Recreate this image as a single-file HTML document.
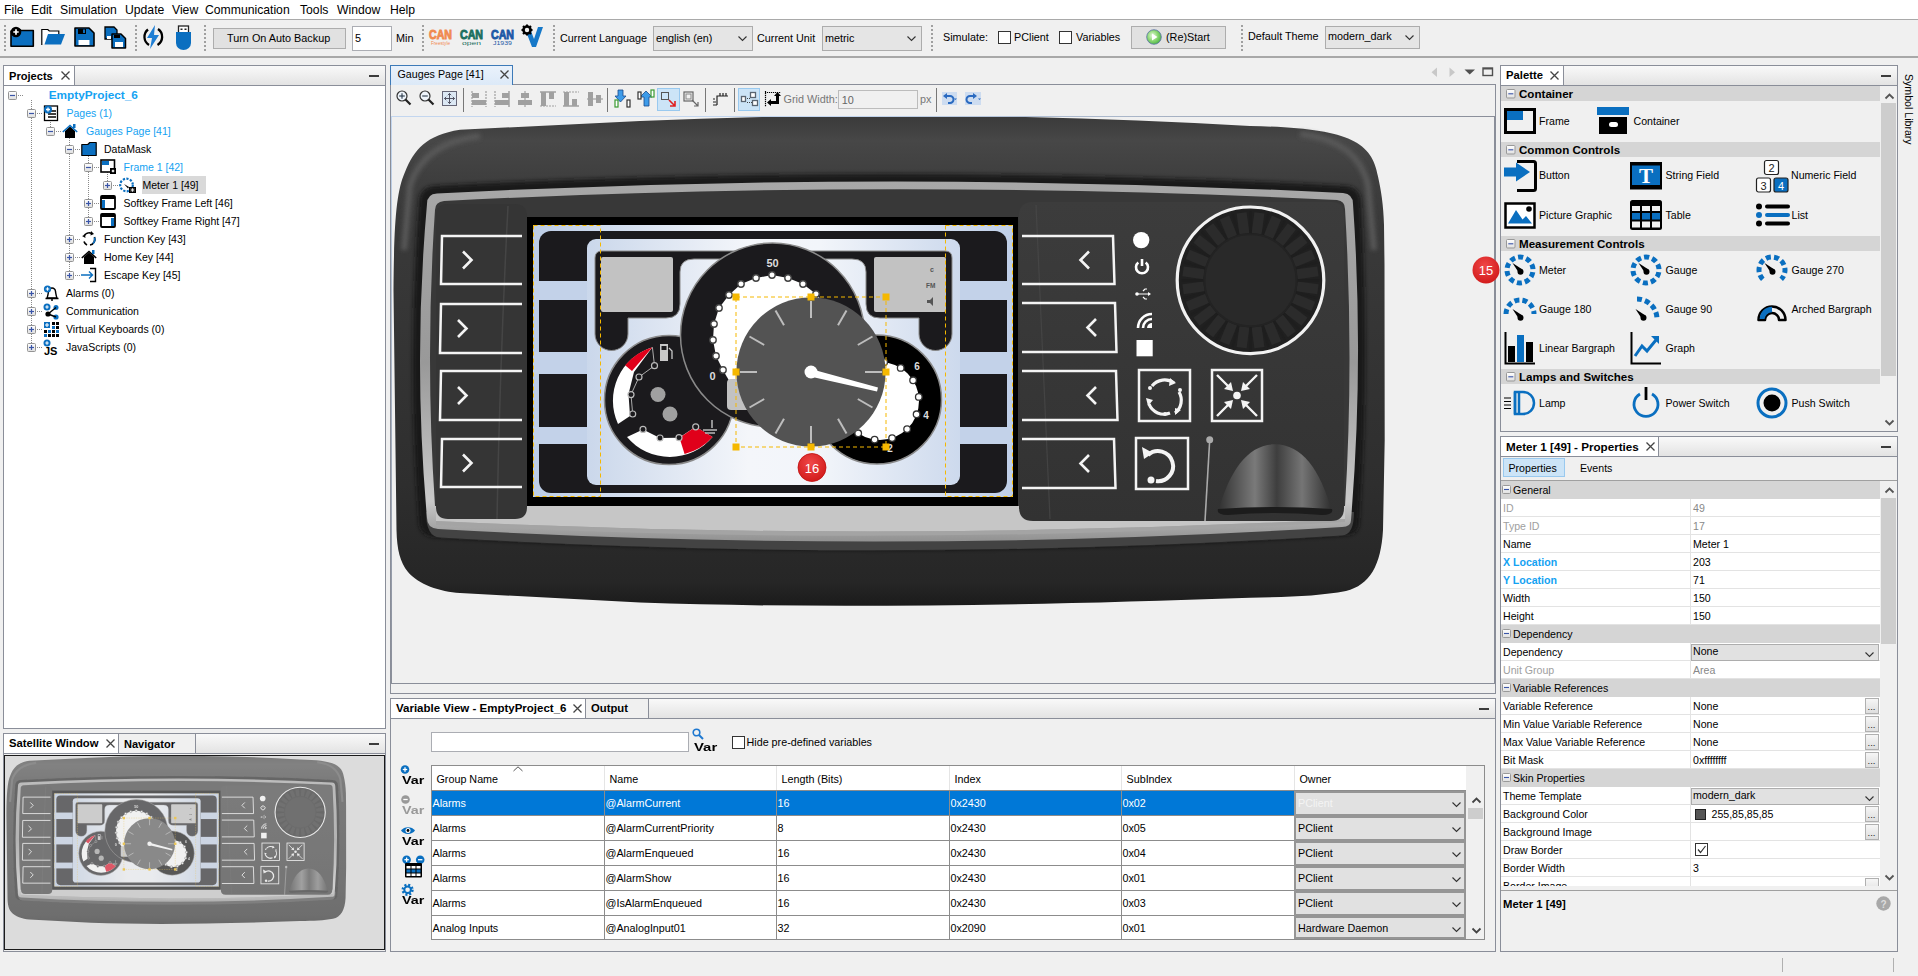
<!DOCTYPE html><html><head><meta charset="utf-8"><style>
*{box-sizing:border-box;margin:0;padding:0}
html,body{width:1918px;height:976px;overflow:hidden;background:#f0f0f0;font-family:"Liberation Sans",sans-serif;font-size:12px;color:#000;position:relative}
.a{position:absolute}
svg.a{overflow:visible}
.t{position:absolute;white-space:nowrap}
</style></head><body><div class="a" style="left:0px;top:0px;width:1918px;height:19px;background:#fff"></div>
<div class="a" style="left:0px;top:19px;width:1918px;height:1px;background:#a9a9a9"></div>
<div class="t" style="left:4px;top:3.67px;font-size:12.2px;line-height:12.2px;color:#000;">File</div>
<div class="t" style="left:31px;top:3.67px;font-size:12.2px;line-height:12.2px;color:#000;">Edit</div>
<div class="t" style="left:60px;top:3.67px;font-size:12.2px;line-height:12.2px;color:#000;">Simulation</div>
<div class="t" style="left:125px;top:3.67px;font-size:12.2px;line-height:12.2px;color:#000;">Update</div>
<div class="t" style="left:172px;top:3.67px;font-size:12.2px;line-height:12.2px;color:#000;">View</div>
<div class="t" style="left:205px;top:3.67px;font-size:12.2px;line-height:12.2px;color:#000;">Communication</div>
<div class="t" style="left:300px;top:3.67px;font-size:12.2px;line-height:12.2px;color:#000;">Tools</div>
<div class="t" style="left:337px;top:3.67px;font-size:12.2px;line-height:12.2px;color:#000;">Window</div>
<div class="t" style="left:390px;top:3.67px;font-size:12.2px;line-height:12.2px;color:#000;">Help</div>
<div class="a" style="left:0px;top:56px;width:1918px;height:2px;background:#a8a8a8"></div>
<div class="a" style="left:3px;top:65px;width:383px;height:664px;border:1px solid #8a8e99;background:#fff"></div>
<div class="a" style="left:4px;top:66px;width:381px;height:19px;background:linear-gradient(#f9f9f9,#e3e3e3)"></div>
<div class="a" style="left:3px;top:85px;width:383px;height:1px;background:#8a8e99"></div>
<div class="a" style="left:4px;top:66px;width:71px;height:19px;background:#fff;border-right:1px solid #8a8e99"></div>
<div class="t" style="left:9px;top:70.60px;font-size:11.1px;line-height:11.1px;font-weight:bold;color:#000;">Projects</div>
<svg class="a" style="left:61px;top:71px;" width="9" height="9" viewBox="0 0 9 9"><path d="M0.5 0.5L8.5 8.5M8.5 0.5L0.5 8.5" stroke="#444" stroke-width="1.3"/></svg>
<div class="a" style="left:369px;top:75px;width:10px;height:2px;background:#3c3c3c"></div>
<div class="a" style="left:3px;top:733px;width:383px;height:219px;border:1px solid #8a8e99;background:#f0f0f0"></div>
<div class="a" style="left:4px;top:734px;width:381px;height:19px;background:linear-gradient(#f9f9f9,#e3e3e3)"></div>
<div class="a" style="left:3px;top:753px;width:383px;height:1px;background:#8a8e99"></div>
<div class="a" style="left:4px;top:734px;width:115px;height:19px;background:#fff;border-right:1px solid #8a8e99"></div>
<div class="t" style="left:9px;top:738.45px;font-size:11.28px;line-height:11.28px;font-weight:bold;color:#000;">Satellite Window</div>
<svg class="a" style="left:106px;top:739px;" width="9" height="9" viewBox="0 0 9 9"><path d="M0.5 0.5L8.5 8.5M8.5 0.5L0.5 8.5" stroke="#444" stroke-width="1.3"/></svg>
<div class="a" style="left:119px;top:734px;width:77px;height:19px;background:#f0f0f0;border-right:1px solid #8a8e99"></div>
<div class="t" style="left:124px;top:738.64px;font-size:11.06px;line-height:11.06px;font-weight:bold;color:#000;">Navigator</div>
<div class="a" style="left:369px;top:743px;width:10px;height:2px;background:#3c3c3c"></div>
<div class="a" style="left:390px;top:84px;width:1106px;height:610px;border:1px solid #8a8e99;background:#f0f0f0"></div>
<div class="a" style="left:390px;top:117px;width:1px;height:567px;background:#8a8e99"></div>
<div class="a" style="left:391px;top:117px;width:1px;height:567px;background:linear-gradient(#c3d6ef,#8a8e99)"></div>
<div class="a" style="left:1494px;top:117px;width:2px;height:567px;background:#8a8e99"></div>
<div class="a" style="left:391px;top:683px;width:1104px;height:1px;background:#8a8e99"></div>
<div class="a" style="left:390px;top:698px;width:1106px;height:254px;border:1px solid #8a8e99;background:#f0f0f0"></div>
<div class="a" style="left:391px;top:699px;width:1104px;height:19px;background:linear-gradient(#f9f9f9,#e3e3e3)"></div>
<div class="a" style="left:390px;top:718px;width:1106px;height:1px;background:#8a8e99"></div>
<div class="a" style="left:391px;top:699px;width:195px;height:19px;background:#fff;border-right:1px solid #8a8e99"></div>
<div class="t" style="left:396px;top:703.27px;font-size:11.5px;line-height:11.5px;font-weight:bold;color:#000;">Variable View - EmptyProject_6</div>
<svg class="a" style="left:573px;top:704px;" width="9" height="9" viewBox="0 0 9 9"><path d="M0.5 0.5L8.5 8.5M8.5 0.5L0.5 8.5" stroke="#444" stroke-width="1.3"/></svg>
<div class="a" style="left:586px;top:699px;width:63px;height:19px;background:#f0f0f0;border-right:1px solid #8a8e99"></div>
<div class="t" style="left:591px;top:703.44px;font-size:11.29px;line-height:11.29px;font-weight:bold;color:#000;">Output</div>
<div class="a" style="left:1479px;top:708px;width:10px;height:2px;background:#3c3c3c"></div>
<div class="a" style="left:1500px;top:65px;width:398px;height:367px;border:1px solid #8a8e99;background:#f0f0f0"></div>
<div class="a" style="left:1501px;top:66px;width:396px;height:19px;background:linear-gradient(#f9f9f9,#e3e3e3)"></div>
<div class="a" style="left:1500px;top:85px;width:398px;height:1px;background:#8a8e99"></div>
<div class="a" style="left:1501px;top:66px;width:63px;height:19px;background:#fff;border-right:1px solid #8a8e99"></div>
<div class="t" style="left:1506px;top:70.45px;font-size:11.28px;line-height:11.28px;font-weight:bold;color:#000;">Palette</div>
<svg class="a" style="left:1550px;top:71px;" width="9" height="9" viewBox="0 0 9 9"><path d="M0.5 0.5L8.5 8.5M8.5 0.5L0.5 8.5" stroke="#444" stroke-width="1.3"/></svg>
<div class="a" style="left:1881px;top:75px;width:10px;height:2px;background:#3c3c3c"></div>
<div class="a" style="left:1500px;top:436px;width:398px;height:516px;border:1px solid #8a8e99;background:#f0f0f0"></div>
<div class="a" style="left:1501px;top:437px;width:396px;height:19px;background:linear-gradient(#f9f9f9,#e3e3e3)"></div>
<div class="a" style="left:1500px;top:456px;width:398px;height:1px;background:#8a8e99"></div>
<div class="a" style="left:1501px;top:437px;width:158px;height:19px;background:#fff;border-right:1px solid #8a8e99"></div>
<div class="t" style="left:1506px;top:441.12px;font-size:11.67px;line-height:11.67px;font-weight:bold;color:#000;">Meter 1 [49] - Properties</div>
<svg class="a" style="left:1646px;top:442px;" width="9" height="9" viewBox="0 0 9 9"><path d="M0.5 0.5L8.5 8.5M8.5 0.5L0.5 8.5" stroke="#444" stroke-width="1.3"/></svg>
<div class="a" style="left:1881px;top:446px;width:10px;height:2px;background:#3c3c3c"></div>
<div class="a" style="left:4px;top:25px;width:2px;height:26px;background:repeating-linear-gradient(#a0a0a0 0 2px,transparent 2px 4px)"></div>
<svg class="a" style="left:10px;top:26px;" width="25" height="22" viewBox="0 0 25 22"><path d="M1 5h7l1.5-1.5h0.5L11 4.5h12.3v15.7H1z" fill="#0b6fc0" stroke="#000" stroke-width="1.6" stroke-linejoin="round"/><circle cx="6" cy="6" r="5.3" fill="#000"/><path d="M6 3.3v5.4M3.3 6h5.4" stroke="#fff" stroke-width="1.7"/></svg>
<svg class="a" style="left:41px;top:28px;" width="25" height="18" viewBox="0 0 25 18"><path d="M0.8 17V1.5h6l1.5 1.5h9.5v3" fill="#fff" stroke="#000" stroke-width="1.2"/><path d="M3.5 16.5L7 6h17l-4 10.5z" fill="#0b6fc0"/></svg>
<svg class="a" style="left:74px;top:27px;" width="21" height="20" viewBox="0 0 21 20"><path d="M1 1h14l5 5v13H1z" fill="#0b6fc0" stroke="#000" stroke-width="1.6" stroke-linejoin="round"/><rect x="4" y="2" width="8" height="5" fill="#000"/><rect x="9" y="2.5" width="2" height="3.5" fill="#0b6fc0"/><rect x="4.5" y="13" width="11" height="5" fill="#fff"/></svg>
<svg class="a" style="left:104px;top:26px;" width="23" height="23" viewBox="0 0 23 23"><path d="M1 1h9l3 3v9H1z" fill="#0b6fc0" stroke="#000" stroke-width="1.3"/><path d="M8 8h9l4.5 4.5V22H8z" fill="#0b6fc0" stroke="#000" stroke-width="1.5" stroke-linejoin="round"/><rect x="11" y="16" width="8" height="5" fill="#fff"/><rect x="10" y="9" width="6" height="3" fill="#000"/><rect x="3" y="10" width="4" height="3" fill="#fff"/></svg>
<div class="a" style="left:135px;top:25px;width:2px;height:26px;background:repeating-linear-gradient(#a0a0a0 0 2px,transparent 2px 4px)"></div>
<svg class="a" style="left:142px;top:25px;" width="23" height="24" viewBox="0 0 23 24"><path d="M6 4.5A9.5 9.5 0 0 0 7 20M16 4A9.5 9.5 0 0 1 15.5 20" fill="none" stroke="#000" stroke-width="2.3"/><path d="M13 0L5 13h5l-2 11 9-14h-5z" fill="#1e7ed4"/></svg>
<svg class="a" style="left:176px;top:25px;" width="16" height="25" viewBox="0 0 16 25"><rect x="2.5" y="1" width="10" height="8" fill="#fff" stroke="#222" stroke-width="1.3"/><rect x="4.5" y="3.5" width="2" height="1.5" fill="#222"/><rect x="8.5" y="3.5" width="2" height="1.5" fill="#222"/><path d="M0 7h15v11a7.5 7 0 0 1-15 0z" fill="#0b6fc0"/></svg>
<div class="a" style="left:204px;top:25px;width:2px;height:26px;background:repeating-linear-gradient(#a0a0a0 0 2px,transparent 2px 4px)"></div>
<div class="a" style="left:213px;top:28px;width:133px;height:21px;background:#e1e1e1;border:1px solid #adadad"></div>
<div class="t" style="left:227px;top:32.82px;font-size:10.85px;line-height:10.85px;color:#000;">Turn On Auto Backup</div>
<div class="a" style="left:352px;top:26px;width:40px;height:25px;background:#fff;border:1px solid #abadb3"></div>
<div class="t" style="left:355px;top:32.82px;font-size:10.85px;line-height:10.85px;color:#000;">5</div>
<div class="t" style="left:396px;top:32.82px;font-size:10.85px;line-height:10.85px;color:#000;">Min</div>
<div class="a" style="left:422px;top:25px;width:2px;height:26px;background:repeating-linear-gradient(#a0a0a0 0 2px,transparent 2px 4px)"></div>
<svg class="a" style="left:428px;top:28px;" width="25" height="18" viewBox="0 0 25 18"><text x="12.5" y="11" text-anchor="middle" font-family="Liberation Sans" font-weight="bold" font-size="13" fill="#f08a50" stroke="#f08a50" stroke-width="0.9" textLength="23" lengthAdjust="spacingAndGlyphs">CAN</text><text x="12.5" y="17" text-anchor="middle" font-family="Liberation Sans" font-size="5.5" fill="#f08a50" textLength="19" lengthAdjust="spacingAndGlyphs">Freestyle</text></svg>
<svg class="a" style="left:459px;top:28px;" width="25" height="18" viewBox="0 0 25 18"><text x="12.5" y="11" text-anchor="middle" font-family="Liberation Sans" font-weight="bold" font-size="13" fill="#1b6f5f" stroke="#1b6f5f" stroke-width="0.9" textLength="23" lengthAdjust="spacingAndGlyphs">CAN</text><text x="12.5" y="17" text-anchor="middle" font-family="Liberation Sans" font-size="5.5" fill="#1b6f5f" textLength="19" lengthAdjust="spacingAndGlyphs">open</text></svg>
<svg class="a" style="left:490px;top:28px;" width="25" height="18" viewBox="0 0 25 18"><text x="12.5" y="11" text-anchor="middle" font-family="Liberation Sans" font-weight="bold" font-size="13" fill="#1c58a6" stroke="#1c58a6" stroke-width="0.9" textLength="23" lengthAdjust="spacingAndGlyphs">CAN</text><text x="12.5" y="17" text-anchor="middle" font-family="Liberation Sans" font-size="5.5" fill="#1c58a6" textLength="19" lengthAdjust="spacingAndGlyphs">J1939</text></svg>
<svg class="a" style="left:521px;top:24px;" width="23" height="24" viewBox="0 0 23 24"><path d="M6 10l5 13h4l7-20h-5l-4 12-3-8z" fill="#1678c8"/><circle cx="6" cy="6" r="3.5" fill="none" stroke="#000" stroke-width="2.6"/><g stroke="#000" stroke-width="2"><path d="M6 0.5v2.5M6 9v2.5M0.5 6h2.5M9 6h2.5M2 2l2 2M8 8l2 2M10 2L8 4M2 10l2-2"/></g></svg>
<div class="a" style="left:553px;top:25px;width:2px;height:26px;background:repeating-linear-gradient(#a0a0a0 0 2px,transparent 2px 4px)"></div>
<div class="t" style="left:560px;top:32.86px;font-size:10.8px;line-height:10.8px;color:#000;">Current Language</div>
<div class="a" style="left:653px;top:26px;width:100px;height:25px;background:#e5e5e5;border:1px solid #acacac"></div>
<div class="t" style="left:656px;top:32.86px;font-size:10.8px;line-height:10.8px;color:#000;">english (en)</div>
<svg class="a" style="left:738px;top:36.0px;" width="9" height="5" viewBox="0 0 9 5"><path d="M0.5 0.5L4.5 4.5L8.5 0.5" fill="none" stroke="#333" stroke-width="1.1"/></svg>
<div class="t" style="left:757px;top:32.86px;font-size:10.8px;line-height:10.8px;color:#000;">Current Unit</div>
<div class="a" style="left:822px;top:26px;width:100px;height:25px;background:#e5e5e5;border:1px solid #acacac"></div>
<div class="t" style="left:825px;top:32.86px;font-size:10.8px;line-height:10.8px;color:#000;">metric</div>
<svg class="a" style="left:907px;top:36.0px;" width="9" height="5" viewBox="0 0 9 5"><path d="M0.5 0.5L4.5 4.5L8.5 0.5" fill="none" stroke="#333" stroke-width="1.1"/></svg>
<div class="a" style="left:931px;top:25px;width:2px;height:26px;background:repeating-linear-gradient(#a0a0a0 0 2px,transparent 2px 4px)"></div>
<div class="t" style="left:943px;top:31.86px;font-size:10.8px;line-height:10.8px;color:#000;">Simulate:</div>
<div class="a" style="left:998px;top:31px;width:13px;height:13px;border:1px solid #333;background:#fff"></div>
<div class="t" style="left:1014px;top:31.86px;font-size:10.8px;line-height:10.8px;color:#000;">PClient</div>
<div class="a" style="left:1059px;top:31px;width:13px;height:13px;border:1px solid #333;background:#fff"></div>
<div class="t" style="left:1076px;top:31.86px;font-size:10.8px;line-height:10.8px;color:#000;">Variables</div>
<div class="a" style="left:1131px;top:26px;width:95px;height:23px;background:#e1e1e1;border:1px solid #adadad"></div>
<svg class="a" style="left:1146px;top:29px;" width="16" height="16" viewBox="0 0 16 16"><defs><radialGradient id="gg" cx="0.4" cy="0.4" r="0.7"><stop offset="0" stop-color="#e6f8dc"/><stop offset="0.5" stop-color="#8cd874"/><stop offset="1" stop-color="#3fae3a"/></radialGradient></defs><circle cx="8" cy="8" r="7.3" fill="url(#gg)" stroke="#5a6fa8" stroke-width="0.8"/><path d="M6 4.5v7l5.5-3.5z" fill="#fff"/></svg>
<div class="t" style="left:1166px;top:31.86px;font-size:10.8px;line-height:10.8px;color:#000;">(Re)Start</div>
<div class="a" style="left:1241px;top:25px;width:2px;height:26px;background:repeating-linear-gradient(#a0a0a0 0 2px,transparent 2px 4px)"></div>
<div class="t" style="left:1248px;top:30.86px;font-size:10.8px;line-height:10.8px;color:#000;">Default Theme</div>
<div class="a" style="left:1325px;top:26px;width:95px;height:23px;background:#e5e5e5;border:1px solid #acacac"></div>
<div class="t" style="left:1328px;top:30.86px;font-size:10.8px;line-height:10.8px;color:#000;">modern_dark</div>
<svg class="a" style="left:1405px;top:35.0px;" width="9" height="5" viewBox="0 0 9 5"><path d="M0.5 0.5L4.5 4.5L8.5 0.5" fill="none" stroke="#333" stroke-width="1.1"/></svg>
<div class="a" style="left:31px;top:100px;width:1px;height:248px;background:repeating-linear-gradient(#8a8a8a 0 1px,transparent 1px 2px)"></div>
<div class="a" style="left:50px;top:118px;width:1px;height:13px;background:repeating-linear-gradient(#8a8a8a 0 1px,transparent 1px 2px)"></div>
<div class="a" style="left:69px;top:136px;width:1px;height:140px;background:repeating-linear-gradient(#8a8a8a 0 1px,transparent 1px 2px)"></div>
<div class="a" style="left:88px;top:154px;width:1px;height:68px;background:repeating-linear-gradient(#8a8a8a 0 1px,transparent 1px 2px)"></div>
<div class="a" style="left:107px;top:172px;width:1px;height:10px;background:repeating-linear-gradient(#8a8a8a 0 1px,transparent 1px 2px)"></div>
<svg class="a" style="left:8px;top:91px;" width="9" height="9" viewBox="0 0 9 9"><defs><linearGradient id="eg" x1="0" y1="0" x2="0" y2="1"><stop offset="0" stop-color="#fff"/><stop offset="1" stop-color="#dedede"/></linearGradient></defs><rect x="0.5" y="0.5" width="8" height="8" rx="1" fill="url(#eg)" stroke="#949494"/><path d="M2 4.5h5" stroke="#3a55a8" stroke-width="1.2"/></svg>
<div class="a" style="left:18px;top:95px;width:6px;height:1px;background:repeating-linear-gradient(90deg,#8a8a8a 0 1px,transparent 1px 2px)"></div>
<div class="t" style="left:48.7px;top:90.01px;font-size:11.8px;line-height:11.8px;font-weight:bold;color:#14a2f2;">EmptyProject_6</div>
<svg class="a" style="left:27px;top:109px;" width="9" height="9" viewBox="0 0 9 9"><defs><linearGradient id="eg" x1="0" y1="0" x2="0" y2="1"><stop offset="0" stop-color="#fff"/><stop offset="1" stop-color="#dedede"/></linearGradient></defs><rect x="0.5" y="0.5" width="8" height="8" rx="1" fill="url(#eg)" stroke="#949494"/><path d="M2 4.5h5" stroke="#3a55a8" stroke-width="1.2"/></svg>
<div class="a" style="left:37px;top:113px;width:6px;height:1px;background:repeating-linear-gradient(90deg,#8a8a8a 0 1px,transparent 1px 2px)"></div>
<svg class="a" style="left:43px;top:105px;" width="16" height="16" viewBox="0 0 16 16"><rect x="1.5" y="1" width="13" height="14.5" fill="#fff" stroke="#000" stroke-width="1.3"/><path d="M8 6h5M5 9h8M5 12h8" stroke="#000" stroke-width="1.4"/><circle cx="5" cy="4.5" r="4" fill="#0b6fc0"/><path d="M5 2.5v4M3 4.5h4" stroke="#fff" stroke-width="1.3"/></svg>
<div class="t" style="left:66.5px;top:108.11px;font-size:10.5px;line-height:10.5px;color:#14a2f2;">Pages (1)</div>
<svg class="a" style="left:46px;top:127px;" width="9" height="9" viewBox="0 0 9 9"><defs><linearGradient id="eg" x1="0" y1="0" x2="0" y2="1"><stop offset="0" stop-color="#fff"/><stop offset="1" stop-color="#dedede"/></linearGradient></defs><rect x="0.5" y="0.5" width="8" height="8" rx="1" fill="url(#eg)" stroke="#949494"/><path d="M2 4.5h5" stroke="#3a55a8" stroke-width="1.2"/></svg>
<div class="a" style="left:56px;top:131px;width:6px;height:1px;background:repeating-linear-gradient(90deg,#8a8a8a 0 1px,transparent 1px 2px)"></div>
<svg class="a" style="left:62px;top:123px;" width="16" height="16" viewBox="0 0 16 16"><path d="M3 8v7h10V8L8 3.5z" fill="#000"/><path d="M0.8 9L8 2.5l7.2 6.5" fill="none" stroke="#0b6fc0" stroke-width="1.6"/><rect x="11" y="1" width="2.5" height="4" fill="#0b6fc0"/></svg>
<div class="t" style="left:86px;top:126.11px;font-size:10.5px;line-height:10.5px;color:#14a2f2;">Gauges Page [41]</div>
<svg class="a" style="left:65px;top:145px;" width="9" height="9" viewBox="0 0 9 9"><defs><linearGradient id="eg" x1="0" y1="0" x2="0" y2="1"><stop offset="0" stop-color="#fff"/><stop offset="1" stop-color="#dedede"/></linearGradient></defs><rect x="0.5" y="0.5" width="8" height="8" rx="1" fill="url(#eg)" stroke="#949494"/><path d="M2 4.5h5" stroke="#3a55a8" stroke-width="1.2"/></svg>
<div class="a" style="left:75px;top:149px;width:6px;height:1px;background:repeating-linear-gradient(90deg,#8a8a8a 0 1px,transparent 1px 2px)"></div>
<svg class="a" style="left:81px;top:141px;" width="16" height="16" viewBox="0 0 16 16"><path d="M0.8 3.5h6l2-2h6.4v13H0.8z" fill="#0b6fc0" stroke="#000" stroke-width="1.2" stroke-linejoin="round"/></svg>
<div class="t" style="left:104px;top:144.11px;font-size:10.5px;line-height:10.5px;color:#000;">DataMask</div>
<svg class="a" style="left:84px;top:163px;" width="9" height="9" viewBox="0 0 9 9"><defs><linearGradient id="eg" x1="0" y1="0" x2="0" y2="1"><stop offset="0" stop-color="#fff"/><stop offset="1" stop-color="#dedede"/></linearGradient></defs><rect x="0.5" y="0.5" width="8" height="8" rx="1" fill="url(#eg)" stroke="#949494"/><path d="M2 4.5h5" stroke="#3a55a8" stroke-width="1.2"/></svg>
<div class="a" style="left:94px;top:167px;width:6px;height:1px;background:repeating-linear-gradient(90deg,#8a8a8a 0 1px,transparent 1px 2px)"></div>
<svg class="a" style="left:100px;top:159px;" width="16" height="15" viewBox="0 0 16 15"><rect x="1" y="1" width="13.5" height="12" fill="#fff" stroke="#000" stroke-width="1.6"/><rect x="2" y="2" width="7" height="4" fill="#0b6fc0"/><rect x="10" y="9" width="6" height="6" fill="#000"/><path d="M13 10.5v3M11.5 12h3M12 11l2 2M14 11l-2 2" stroke="#fff" stroke-width="0.7"/></svg>
<div class="t" style="left:123.5px;top:162.11px;font-size:10.5px;line-height:10.5px;color:#14a2f2;">Frame 1 [42]</div>
<div class="a" style="left:142px;top:176px;width:64px;height:18px;background:#d9d9d9"></div>
<svg class="a" style="left:103px;top:181px;" width="9" height="9" viewBox="0 0 9 9"><defs><linearGradient id="eg" x1="0" y1="0" x2="0" y2="1"><stop offset="0" stop-color="#fff"/><stop offset="1" stop-color="#dedede"/></linearGradient></defs><rect x="0.5" y="0.5" width="8" height="8" rx="1" fill="url(#eg)" stroke="#949494"/><path d="M2 4.5h5" stroke="#3a55a8" stroke-width="1.2"/><path d="M4.5 2v5" stroke="#3a55a8" stroke-width="1.2"/></svg>
<div class="a" style="left:113px;top:185px;width:6px;height:1px;background:repeating-linear-gradient(90deg,#8a8a8a 0 1px,transparent 1px 2px)"></div>
<svg class="a" style="left:119px;top:177px;" width="17" height="16" viewBox="0 0 17 16"><circle cx="7.5" cy="8" r="6.3" fill="none" stroke="#0b6fc0" stroke-width="2.2" stroke-dasharray="2.2 1.4"/><path d="M5 7l5 3 -1 1.5z" fill="#000"/><rect x="10" y="10" width="7" height="6" fill="#000"/><path d="M13.5 11v4M11.5 13h4M12 11.5l3 3M15 11.5l-3 3" stroke="#fff" stroke-width="0.7"/></svg>
<div class="t" style="left:142.5px;top:180.11px;font-size:10.5px;line-height:10.5px;color:#000;">Meter 1 [49]</div>
<svg class="a" style="left:84px;top:199px;" width="9" height="9" viewBox="0 0 9 9"><defs><linearGradient id="eg" x1="0" y1="0" x2="0" y2="1"><stop offset="0" stop-color="#fff"/><stop offset="1" stop-color="#dedede"/></linearGradient></defs><rect x="0.5" y="0.5" width="8" height="8" rx="1" fill="url(#eg)" stroke="#949494"/><path d="M2 4.5h5" stroke="#3a55a8" stroke-width="1.2"/><path d="M4.5 2v5" stroke="#3a55a8" stroke-width="1.2"/></svg>
<div class="a" style="left:94px;top:203px;width:6px;height:1px;background:repeating-linear-gradient(90deg,#8a8a8a 0 1px,transparent 1px 2px)"></div>
<svg class="a" style="left:100px;top:195px;" width="16" height="15" viewBox="0 0 16 15"><rect x="1" y="1" width="14" height="13" rx="1" fill="#fff" stroke="#000" stroke-width="1.8"/><rect x="1" y="1" width="14" height="3" fill="#000"/><rect x="2" y="5" width="3" height="8" fill="#0b6fc0"/></svg>
<div class="t" style="left:123.5px;top:198.11px;font-size:10.5px;line-height:10.5px;color:#000;">Softkey Frame Left [46]</div>
<svg class="a" style="left:84px;top:217px;" width="9" height="9" viewBox="0 0 9 9"><defs><linearGradient id="eg" x1="0" y1="0" x2="0" y2="1"><stop offset="0" stop-color="#fff"/><stop offset="1" stop-color="#dedede"/></linearGradient></defs><rect x="0.5" y="0.5" width="8" height="8" rx="1" fill="url(#eg)" stroke="#949494"/><path d="M2 4.5h5" stroke="#3a55a8" stroke-width="1.2"/><path d="M4.5 2v5" stroke="#3a55a8" stroke-width="1.2"/></svg>
<div class="a" style="left:94px;top:221px;width:6px;height:1px;background:repeating-linear-gradient(90deg,#8a8a8a 0 1px,transparent 1px 2px)"></div>
<svg class="a" style="left:100px;top:213px;" width="16" height="15" viewBox="0 0 16 15"><rect x="1" y="1" width="14" height="13" rx="1" fill="#fff" stroke="#000" stroke-width="1.8"/><rect x="1" y="1" width="14" height="3" fill="#000"/><rect x="11" y="5" width="3" height="8" fill="#0b6fc0"/></svg>
<div class="t" style="left:123.5px;top:216.11px;font-size:10.5px;line-height:10.5px;color:#000;">Softkey Frame Right [47]</div>
<svg class="a" style="left:65px;top:235px;" width="9" height="9" viewBox="0 0 9 9"><defs><linearGradient id="eg" x1="0" y1="0" x2="0" y2="1"><stop offset="0" stop-color="#fff"/><stop offset="1" stop-color="#dedede"/></linearGradient></defs><rect x="0.5" y="0.5" width="8" height="8" rx="1" fill="url(#eg)" stroke="#949494"/><path d="M2 4.5h5" stroke="#3a55a8" stroke-width="1.2"/><path d="M4.5 2v5" stroke="#3a55a8" stroke-width="1.2"/></svg>
<div class="a" style="left:75px;top:239px;width:6px;height:1px;background:repeating-linear-gradient(90deg,#8a8a8a 0 1px,transparent 1px 2px)"></div>
<svg class="a" style="left:81px;top:231px;" width="16" height="16" viewBox="0 0 16 16"><path d="M3 5A6 6 0 0 1 10.5 2.3M13.5 6A6 6 0 0 1 9 14M3 10.5A6 6 0 0 0 6 14" fill="none" stroke="#000" stroke-width="1.7"/><path d="M10 0l3 3-3.5 1.5z" fill="#000"/><path d="M13.5 6.5A6 6 0 0 1 12 12.5" fill="none" stroke="#0b6fc0" stroke-width="1.7"/><path d="M1 5l3 -1 0.5 3z" fill="#000"/></svg>
<div class="t" style="left:104px;top:234.11px;font-size:10.5px;line-height:10.5px;color:#000;">Function Key [43]</div>
<svg class="a" style="left:65px;top:253px;" width="9" height="9" viewBox="0 0 9 9"><defs><linearGradient id="eg" x1="0" y1="0" x2="0" y2="1"><stop offset="0" stop-color="#fff"/><stop offset="1" stop-color="#dedede"/></linearGradient></defs><rect x="0.5" y="0.5" width="8" height="8" rx="1" fill="url(#eg)" stroke="#949494"/><path d="M2 4.5h5" stroke="#3a55a8" stroke-width="1.2"/><path d="M4.5 2v5" stroke="#3a55a8" stroke-width="1.2"/></svg>
<div class="a" style="left:75px;top:257px;width:6px;height:1px;background:repeating-linear-gradient(90deg,#8a8a8a 0 1px,transparent 1px 2px)"></div>
<svg class="a" style="left:81px;top:249px;" width="16" height="16" viewBox="0 0 16 16"><path d="M3 8v7h10V8L8 3.5z" fill="#000"/><path d="M0.8 9L8 2.5l7.2 6.5" fill="none" stroke="#000" stroke-width="1.6"/><rect x="11" y="1" width="2.5" height="4" fill="#0b6fc0"/></svg>
<div class="t" style="left:104px;top:252.11px;font-size:10.5px;line-height:10.5px;color:#000;">Home Key [44]</div>
<svg class="a" style="left:65px;top:271px;" width="9" height="9" viewBox="0 0 9 9"><defs><linearGradient id="eg" x1="0" y1="0" x2="0" y2="1"><stop offset="0" stop-color="#fff"/><stop offset="1" stop-color="#dedede"/></linearGradient></defs><rect x="0.5" y="0.5" width="8" height="8" rx="1" fill="url(#eg)" stroke="#949494"/><path d="M2 4.5h5" stroke="#3a55a8" stroke-width="1.2"/><path d="M4.5 2v5" stroke="#3a55a8" stroke-width="1.2"/></svg>
<div class="a" style="left:75px;top:275px;width:6px;height:1px;background:repeating-linear-gradient(90deg,#8a8a8a 0 1px,transparent 1px 2px)"></div>
<svg class="a" style="left:81px;top:267px;" width="16" height="16" viewBox="0 0 16 16"><path d="M0 8h11M8 4.5L11.5 8 8 11.5" fill="none" stroke="#0b6fc0" stroke-width="1.4"/><path d="M9 1.5h5.5v13H9" fill="none" stroke="#000" stroke-width="1.4"/></svg>
<div class="t" style="left:104px;top:270.11px;font-size:10.5px;line-height:10.5px;color:#000;">Escape Key [45]</div>
<svg class="a" style="left:27px;top:289px;" width="9" height="9" viewBox="0 0 9 9"><defs><linearGradient id="eg" x1="0" y1="0" x2="0" y2="1"><stop offset="0" stop-color="#fff"/><stop offset="1" stop-color="#dedede"/></linearGradient></defs><rect x="0.5" y="0.5" width="8" height="8" rx="1" fill="url(#eg)" stroke="#949494"/><path d="M2 4.5h5" stroke="#3a55a8" stroke-width="1.2"/><path d="M4.5 2v5" stroke="#3a55a8" stroke-width="1.2"/></svg>
<div class="a" style="left:37px;top:293px;width:6px;height:1px;background:repeating-linear-gradient(90deg,#8a8a8a 0 1px,transparent 1px 2px)"></div>
<svg class="a" style="left:43px;top:285px;" width="17" height="17" viewBox="0 0 17 17"><path d="M4 13c1-2 1-4 1.5-6.5a3.5 3.5 0 0 1 7 0c0.5 2.5 0.5 4.5 1.5 6.5z" fill="#fff" stroke="#000" stroke-width="1.4"/><path d="M2.5 13.5h13" stroke="#000" stroke-width="1.5"/><path d="M8 15h2" stroke="#000" stroke-width="1.5"/><circle cx="4.5" cy="4" r="3.6" fill="#0b6fc0"/><path d="M4.5 2.2v3.6M2.7 4h3.6" stroke="#fff" stroke-width="1.2"/></svg>
<div class="t" style="left:66px;top:288.11px;font-size:10.5px;line-height:10.5px;color:#000;">Alarms (0)</div>
<svg class="a" style="left:27px;top:307px;" width="9" height="9" viewBox="0 0 9 9"><defs><linearGradient id="eg" x1="0" y1="0" x2="0" y2="1"><stop offset="0" stop-color="#fff"/><stop offset="1" stop-color="#dedede"/></linearGradient></defs><rect x="0.5" y="0.5" width="8" height="8" rx="1" fill="url(#eg)" stroke="#949494"/><path d="M2 4.5h5" stroke="#3a55a8" stroke-width="1.2"/><path d="M4.5 2v5" stroke="#3a55a8" stroke-width="1.2"/></svg>
<div class="a" style="left:37px;top:311px;width:6px;height:1px;background:repeating-linear-gradient(90deg,#8a8a8a 0 1px,transparent 1px 2px)"></div>
<svg class="a" style="left:43px;top:303px;" width="17" height="17" viewBox="0 0 17 17"><circle cx="4" cy="4" r="3.5" fill="#0b6fc0"/><path d="M4 2.3v3.4M2.3 4h3.4" stroke="#fff" stroke-width="1.1"/><circle cx="13" cy="4.5" r="2.5" fill="#0b6fc0"/><circle cx="5" cy="11" r="2.6" fill="#000"/><circle cx="13" cy="14" r="2.6" fill="#0b6fc0"/><path d="M5 11L13 4.5M5 11L13 14" stroke="#000" stroke-width="1.4"/></svg>
<div class="t" style="left:66px;top:306.11px;font-size:10.5px;line-height:10.5px;color:#000;">Communication</div>
<svg class="a" style="left:27px;top:325px;" width="9" height="9" viewBox="0 0 9 9"><defs><linearGradient id="eg" x1="0" y1="0" x2="0" y2="1"><stop offset="0" stop-color="#fff"/><stop offset="1" stop-color="#dedede"/></linearGradient></defs><rect x="0.5" y="0.5" width="8" height="8" rx="1" fill="url(#eg)" stroke="#949494"/><path d="M2 4.5h5" stroke="#3a55a8" stroke-width="1.2"/><path d="M4.5 2v5" stroke="#3a55a8" stroke-width="1.2"/></svg>
<div class="a" style="left:37px;top:329px;width:6px;height:1px;background:repeating-linear-gradient(90deg,#8a8a8a 0 1px,transparent 1px 2px)"></div>
<svg class="a" style="left:43px;top:321px;" width="17" height="17" viewBox="0 0 17 17"><rect x="1" y="1" width="6" height="6" fill="#0b6fc0"/><path d="M4 2v4M2 4h4" stroke="#fff" stroke-width="1.1"/><rect x="9" y="1" width="3" height="3" fill="#000"/><rect x="13" y="1" width="3" height="3" fill="#000"/><rect x="9" y="5" width="3" height="3" fill="#0b6fc0"/><rect x="13" y="5" width="3" height="3" fill="#000"/><rect x="1" y="9" width="3" height="3" fill="#000"/><rect x="5" y="9" width="3" height="3" fill="#0b6fc0"/><rect x="9" y="9" width="3" height="3" fill="#000"/><rect x="13" y="9" width="3" height="3" fill="#0b6fc0"/><rect x="1" y="13" width="3" height="3" fill="#0b6fc0"/><rect x="5" y="13" width="3" height="3" fill="#000"/><rect x="9" y="13" width="3" height="3" fill="#000"/><rect x="13" y="13" width="3" height="3" fill="#000"/></svg>
<div class="t" style="left:66px;top:324.11px;font-size:10.5px;line-height:10.5px;color:#000;">Virtual Keyboards (0)</div>
<svg class="a" style="left:27px;top:343px;" width="9" height="9" viewBox="0 0 9 9"><defs><linearGradient id="eg" x1="0" y1="0" x2="0" y2="1"><stop offset="0" stop-color="#fff"/><stop offset="1" stop-color="#dedede"/></linearGradient></defs><rect x="0.5" y="0.5" width="8" height="8" rx="1" fill="url(#eg)" stroke="#949494"/><path d="M2 4.5h5" stroke="#3a55a8" stroke-width="1.2"/><path d="M4.5 2v5" stroke="#3a55a8" stroke-width="1.2"/></svg>
<div class="a" style="left:37px;top:347px;width:6px;height:1px;background:repeating-linear-gradient(90deg,#8a8a8a 0 1px,transparent 1px 2px)"></div>
<svg class="a" style="left:43px;top:339px;" width="17" height="17" viewBox="0 0 17 17"><circle cx="4" cy="4" r="3.5" fill="#0b6fc0"/><path d="M4 2.3v3.4M2.3 4h3.4" stroke="#fff" stroke-width="1.1"/><text x="1" y="16" font-family="Liberation Sans" font-weight="bold" font-size="11" fill="#000">JS</text></svg>
<div class="t" style="left:66px;top:342.11px;font-size:10.5px;line-height:10.5px;color:#000;">JavaScripts (0)</div>
<div class="a" style="left:1881px;top:86px;width:16px;height:345px;background:#f0f0f0"></div>
<div class="a" style="left:1881px;top:103px;width:15px;height:273px;background:#cdcdcd"></div>
<svg class="a" style="left:1884.5px;top:94.0px;" width="9" height="5" viewBox="0 0 9 5"><path d="M0.5 4.5L4.5 0.5L8.5 4.5" fill="none" stroke="#555" stroke-width="1.8"/></svg>
<svg class="a" style="left:1884.5px;top:420.0px;" width="9" height="5" viewBox="0 0 9 5"><path d="M0.5 0.5L4.5 4.5L8.5 0.5" fill="none" stroke="#555" stroke-width="1.8"/></svg>
<div class="a" style="left:1501px;top:86px;width:379px;height:15px;background:#d5d5d5"></div>
<svg class="a" style="left:1506px;top:89px;" width="10" height="10" viewBox="0 0 10 10"><defs><linearGradient id="pg" x1="0" y1="0" x2="0" y2="1"><stop offset="0" stop-color="#fff"/><stop offset="1" stop-color="#e0e0e0"/></linearGradient></defs><rect x="0.5" y="0.5" width="8.5" height="8.5" rx="1" fill="url(#pg)" stroke="#999"/><path d="M2.3 4.8h5" stroke="#3a55a8" stroke-width="1.1"/></svg>
<div class="t" style="left:1519px;top:88.18px;font-size:11.6px;line-height:11.6px;font-weight:bold;color:#000;">Container</div>
<div class="a" style="left:1501px;top:142px;width:379px;height:15px;background:#d5d5d5"></div>
<svg class="a" style="left:1506px;top:145px;" width="10" height="10" viewBox="0 0 10 10"><defs><linearGradient id="pg" x1="0" y1="0" x2="0" y2="1"><stop offset="0" stop-color="#fff"/><stop offset="1" stop-color="#e0e0e0"/></linearGradient></defs><rect x="0.5" y="0.5" width="8.5" height="8.5" rx="1" fill="url(#pg)" stroke="#999"/><path d="M2.3 4.8h5" stroke="#3a55a8" stroke-width="1.1"/></svg>
<div class="t" style="left:1519px;top:144.18px;font-size:11.6px;line-height:11.6px;font-weight:bold;color:#000;">Common Controls</div>
<div class="a" style="left:1501px;top:236px;width:379px;height:15px;background:#d5d5d5"></div>
<svg class="a" style="left:1506px;top:239px;" width="10" height="10" viewBox="0 0 10 10"><defs><linearGradient id="pg" x1="0" y1="0" x2="0" y2="1"><stop offset="0" stop-color="#fff"/><stop offset="1" stop-color="#e0e0e0"/></linearGradient></defs><rect x="0.5" y="0.5" width="8.5" height="8.5" rx="1" fill="url(#pg)" stroke="#999"/><path d="M2.3 4.8h5" stroke="#3a55a8" stroke-width="1.1"/></svg>
<div class="t" style="left:1519px;top:238.18px;font-size:11.6px;line-height:11.6px;font-weight:bold;color:#000;">Measurement Controls</div>
<div class="a" style="left:1501px;top:369px;width:379px;height:15px;background:#d5d5d5"></div>
<svg class="a" style="left:1506px;top:372px;" width="10" height="10" viewBox="0 0 10 10"><defs><linearGradient id="pg" x1="0" y1="0" x2="0" y2="1"><stop offset="0" stop-color="#fff"/><stop offset="1" stop-color="#e0e0e0"/></linearGradient></defs><rect x="0.5" y="0.5" width="8.5" height="8.5" rx="1" fill="url(#pg)" stroke="#999"/><path d="M2.3 4.8h5" stroke="#3a55a8" stroke-width="1.1"/></svg>
<div class="t" style="left:1519px;top:371.18px;font-size:11.6px;line-height:11.6px;font-weight:bold;color:#000;">Lamps and Switches</div>
<svg class="a" style="left:1504px;top:108px;" width="32" height="26" viewBox="0 0 32 26"><rect x="1.5" y="1.5" width="29" height="23" fill="none" stroke="#000" stroke-width="3"/><rect x="3" y="3" width="16" height="9" fill="#0a6fc0"/></svg>
<div class="t" style="left:1539px;top:116.03px;font-size:10.6px;line-height:10.6px;color:#000;">Frame</div>
<svg class="a" style="left:1597px;top:107px;" width="32" height="28" viewBox="0 0 32 28"><rect x="0" y="0" width="32" height="8" fill="#0a6fc0"/><rect x="2" y="10" width="28" height="17" fill="#000"/><rect x="12" y="15" width="9" height="5" rx="2.5" fill="#fff"/></svg>
<div class="t" style="left:1633.5px;top:116.03px;font-size:10.6px;line-height:10.6px;color:#000;">Container</div>
<svg class="a" style="left:1504px;top:160px;" width="33" height="32" viewBox="0 0 33 32"><path d="M0 7.5h12V2.5L26 12 12 21.5V16.5H0z" fill="#0a6fc0"/><path d="M13 1.5h16.5a2 2 0 0 1 2 2v25a2 2 0 0 1-2 2H13" fill="none" stroke="#000" stroke-width="3"/></svg>
<svg class="a" style="left:1504px;top:162px;" width="33" height="30" viewBox="0 0 33 30"></svg>
<div class="t" style="left:1539px;top:170.03px;font-size:10.6px;line-height:10.6px;color:#000;">Button</div>
<svg class="a" style="left:1630px;top:162px;" width="33" height="28" viewBox="0 0 33 28"><rect x="0" y="0" width="32" height="27.5" fill="#000"/><rect x="2" y="3.5" width="28" height="19.5" fill="#0a6fc0"/><text x="16" y="21" text-anchor="middle" font-family="Liberation Serif" font-weight="bold" font-size="21" fill="#fff">T</text></svg>
<div class="t" style="left:1665.5px;top:170.03px;font-size:10.6px;line-height:10.6px;color:#000;">String Field</div>
<svg class="a" style="left:1756px;top:159px;" width="34" height="34" viewBox="0 0 34 34"><rect x="8.5" y="1.5" width="14" height="14" rx="2" fill="#fff" stroke="#222" stroke-width="1.2"/><text x="15.5" y="13" text-anchor="middle" font-family="Liberation Sans" font-size="11" fill="#222">2</text><rect x="0.5" y="19" width="14" height="14" rx="2" fill="#fff" stroke="#222" stroke-width="1.2"/><text x="7.5" y="30.5" text-anchor="middle" font-family="Liberation Sans" font-size="11" fill="#222">3</text><rect x="18" y="19" width="14" height="14" rx="2" fill="#0a6fc0" stroke="#222" stroke-width="1.2"/><text x="25" y="30.5" text-anchor="middle" font-family="Liberation Sans" font-size="11" fill="#fff">4</text></svg>
<div class="t" style="left:1791px;top:170.03px;font-size:10.6px;line-height:10.6px;color:#000;">Numeric Field</div>
<svg class="a" style="left:1504px;top:202px;" width="32" height="27" viewBox="0 0 32 27"><rect x="1.5" y="1.5" width="29" height="24" fill="#fff" stroke="#000" stroke-width="2.5"/><path d="M4 21.5L12 8l6.5 9.5 3.5-3.5 6 7.5z" fill="#0a6fc0"/><circle cx="25" cy="7" r="2.8" fill="#000"/></svg>
<div class="t" style="left:1539px;top:209.53px;font-size:10.6px;line-height:10.6px;color:#000;">Picture Graphic</div>
<svg class="a" style="left:1630px;top:200px;" width="33" height="30" viewBox="0 0 33 30"><rect x="0" y="0" width="32" height="30" rx="2.5" fill="#000"/><g fill="#f0f0f0"><rect x="2" y="6" width="8" height="5"/><rect x="12" y="6" width="8" height="5"/><rect x="22" y="6" width="8" height="5"/><rect x="2" y="21.5" width="8" height="6"/><rect x="12" y="21.5" width="8" height="6"/><rect x="22" y="21.5" width="8" height="6"/></g><g fill="#0a6fc0"><rect x="2" y="13" width="8" height="6.5"/><rect x="12" y="13" width="8" height="6.5"/><rect x="22" y="13" width="8" height="6.5"/></g></svg>
<div class="t" style="left:1665.5px;top:209.53px;font-size:10.6px;line-height:10.6px;color:#000;">Table</div>
<svg class="a" style="left:1756px;top:203px;" width="33" height="25" viewBox="0 0 33 25"><g stroke-linecap="round" stroke-width="4"><path d="M11 3.5h21M11 20.5h21" stroke="#000"/><path d="M11 12h21" stroke="#0a6fc0"/></g><circle cx="3" cy="3.5" r="3" fill="#000"/><circle cx="3" cy="12" r="3" fill="#0a6fc0"/><circle cx="3" cy="20.5" r="3" fill="#000"/></svg>
<div class="t" style="left:1791.5px;top:209.53px;font-size:10.6px;line-height:10.6px;color:#000;">List</div>
<svg class="a" style="left:1504px;top:254px;" width="32" height="32" viewBox="0 0 32 32"><circle cx="16" cy="16" r="13" fill="none" stroke="#0a6fc0" stroke-width="5" stroke-dasharray="5 3.1" transform="rotate(-98 16 16)"/><path d="M8.5 9L18.5 15.5L15 19z" fill="#000"/><circle cx="16.5" cy="17.8" r="3" fill="#000"/></svg>
<div class="t" style="left:1539px;top:264.53px;font-size:10.6px;line-height:10.6px;color:#000;">Meter</div>
<svg class="a" style="left:1630px;top:254px;" width="32" height="32" viewBox="0 0 32 32"><circle cx="16" cy="16" r="13" fill="none" stroke="#0a6fc0" stroke-width="5" stroke-dasharray="5 3.1" transform="rotate(-98 16 16)"/><path d="M8.5 9L18.5 15.5L15 19z" fill="#000"/><circle cx="16.5" cy="17.8" r="3" fill="#000"/></svg>
<div class="t" style="left:1665.5px;top:264.53px;font-size:10.6px;line-height:10.6px;color:#000;">Gauge</div>
<svg class="a" style="left:1756px;top:254px;" width="32" height="32" viewBox="0 0 32 32"><path d="M6.8 25.2A13 13 0 1 1 25.2 25.2" fill="none" stroke="#0a6fc0" stroke-width="5" stroke-dasharray="5 3.1"/><path d="M8.5 9L18.5 15.5L15 19z" fill="#000"/><circle cx="16.5" cy="17.8" r="3" fill="#000"/></svg>
<div class="t" style="left:1791.5px;top:264.53px;font-size:10.6px;line-height:10.6px;color:#000;">Gauge 270</div>
<svg class="a" style="left:1504px;top:294px;" width="32" height="32" viewBox="0 0 32 32"><path d="M2 20A14 14 0 0 1 30 20" fill="none" stroke="#0a6fc0" stroke-width="5" stroke-dasharray="5 3.1"/><path d="M8.5 15L18.5 21.5L15 25z" fill="#000"/><circle cx="16.5" cy="23.8" r="3" fill="#000"/></svg>
<div class="t" style="left:1539px;top:303.53px;font-size:10.6px;line-height:10.6px;color:#000;">Gauge 180</div>
<svg class="a" style="left:1630px;top:294px;" width="32" height="32" viewBox="0 0 32 32"><path d="M7 5A20 20 0 0 1 27 25" fill="none" stroke="#0a6fc0" stroke-width="5" stroke-dasharray="5 3.1"/><path d="M5.5 15L15.5 21.5L12 25z" fill="#000"/><circle cx="13.5" cy="23.8" r="3" fill="#000"/></svg>
<div class="t" style="left:1665.5px;top:303.53px;font-size:10.6px;line-height:10.6px;color:#000;">Gauge 90</div>
<svg class="a" style="left:1756px;top:298px;" width="32" height="24" viewBox="0 0 32 24"><path d="M2.5 22A13.5 13.5 0 0 1 29.5 22h-6.5A7 7 0 0 0 9 22z" fill="none" stroke="#000" stroke-width="2.5" stroke-linejoin="round"/><path d="M3.7 21A12.3 12.3 0 0 1 16 8.7v5.5A7.5 7.5 0 0 0 8.5 21z" fill="#0a6fc0"/></svg>
<div class="t" style="left:1791.5px;top:303.53px;font-size:10.6px;line-height:10.6px;color:#000;">Arched Bargraph</div>
<svg class="a" style="left:1504px;top:332px;" width="32" height="33" viewBox="0 0 32 33"><path d="M1.5 0v31.5H31" fill="none" stroke="#000" stroke-width="2"/><rect x="4" y="14" width="7" height="16" fill="#000"/><rect x="13" y="3" width="7" height="27" fill="#0a6fc0"/><rect x="22" y="10" width="7" height="20" fill="#000"/></svg>
<div class="t" style="left:1539px;top:342.53px;font-size:10.6px;line-height:10.6px;color:#000;">Linear Bargraph</div>
<svg class="a" style="left:1630px;top:332px;" width="32" height="33" viewBox="0 0 32 33"><path d="M1.5 0v31.5H31" fill="none" stroke="#000" stroke-width="2"/><path d="M5 24l7-10 5 5 9-11" fill="none" stroke="#0a6fc0" stroke-width="3"/><path d="M21 4h8v8z" fill="#0a6fc0"/></svg>
<div class="t" style="left:1665.5px;top:342.53px;font-size:10.6px;line-height:10.6px;color:#000;">Graph</div>
<svg class="a" style="left:1504px;top:389px;" width="32" height="29" viewBox="0 0 32 29"><path d="M0 9h7M0 12.5h7M0 16h7M0 19.5h7" stroke="#000" stroke-width="1.2"/><path d="M11 3h8a11 11 0 0 1 0 22h-8z" fill="none" stroke="#0a6fc0" stroke-width="2.5"/><path d="M11 3v22M15 3v22" stroke="#0a6fc0" stroke-width="2.5"/></svg>
<div class="t" style="left:1539px;top:397.53px;font-size:10.6px;line-height:10.6px;color:#000;">Lamp</div>
<svg class="a" style="left:1630px;top:387px;" width="32" height="32" viewBox="0 0 32 32"><path d="M10 7A12 12 0 1 0 22 7" fill="none" stroke="#0a6fc0" stroke-width="2.8"/><path d="M16 0v13" stroke="#000" stroke-width="2.8"/></svg>
<div class="t" style="left:1665.5px;top:397.53px;font-size:10.6px;line-height:10.6px;color:#000;">Power Switch</div>
<svg class="a" style="left:1756px;top:387px;" width="32" height="32" viewBox="0 0 32 32"><circle cx="16" cy="16" r="14" fill="none" stroke="#0a6fc0" stroke-width="3"/><circle cx="16" cy="16" r="8.5" fill="#000"/></svg>
<div class="t" style="left:1791.5px;top:397.53px;font-size:10.6px;line-height:10.6px;color:#000;">Push Switch</div>
<div class="t" style="left:1903px;top:74px;font-size:10.6px;line-height:12px;writing-mode:vertical-rl;">Symbol Library</div>
<div class="a" style="left:1503px;top:458px;width:62px;height:19px;background:#cce4f7;border:1px solid #99c9ef"></div>
<div class="t" style="left:1508.5px;top:462.53px;font-size:10.6px;line-height:10.6px;color:#000;">Properties</div>
<div class="t" style="left:1580px;top:462.53px;font-size:10.6px;line-height:10.6px;color:#000;">Events</div>
<div class="a" style="left:1501px;top:480px;width:396px;height:1px;background:#a0a0a0"></div>
<div class="a" style="left:1881px;top:481px;width:16px;height:405px;background:#f0f0f0"></div>
<div class="a" style="left:1881px;top:498px;width:15px;height:146px;background:#cdcdcd"></div>
<svg class="a" style="left:1884.5px;top:488.0px;" width="9" height="5" viewBox="0 0 9 5"><path d="M0.5 4.5L4.5 0.5L8.5 4.5" fill="none" stroke="#555" stroke-width="1.8"/></svg>
<svg class="a" style="left:1884.5px;top:875.0px;" width="9" height="5" viewBox="0 0 9 5"><path d="M0.5 0.5L4.5 4.5L8.5 0.5" fill="none" stroke="#555" stroke-width="1.8"/></svg>
<div class="a" style="left:1501px;top:481px;width:380px;height:405px;overflow:hidden">
<div class="a" style="left:0px;top:0px;width:379px;height:18px;background:#d5d5d5"></div>
<svg class="a" style="left:1px;top:4px;" width="9" height="9" viewBox="0 0 9 9"><defs><linearGradient id="pg2" x1="0" y1="0" x2="0" y2="1"><stop offset="0" stop-color="#fff"/><stop offset="1" stop-color="#e0e0e0"/></linearGradient></defs><rect x="0.5" y="0.5" width="8" height="8" rx="1" fill="url(#pg2)" stroke="#999"/><path d="M2 4.5h5" stroke="#3a55a8" stroke-width="1.1"/></svg>
<div class="t" style="left:12px;top:4.03px;font-size:10.6px;line-height:10.6px;color:#000;">General</div>
<div class="a" style="left:0px;top:18px;width:379px;height:18px;background:#fff;border-bottom:1px solid #e3e3e3"></div>
<div class="a" style="left:189px;top:18px;width:1px;height:18px;background:#e3e3e3"></div>
<div class="t" style="left:2px;top:22.03px;font-size:10.6px;line-height:10.6px;color:#a0a0a0;">ID</div>
<div class="t" style="left:192px;top:21.53px;font-size:10.6px;line-height:10.6px;color:#888;">49</div>
<div class="a" style="left:0px;top:36px;width:379px;height:18px;background:#fff;border-bottom:1px solid #e3e3e3"></div>
<div class="a" style="left:189px;top:36px;width:1px;height:18px;background:#e3e3e3"></div>
<div class="t" style="left:2px;top:40.03px;font-size:10.6px;line-height:10.6px;color:#a0a0a0;">Type ID</div>
<div class="t" style="left:192px;top:39.53px;font-size:10.6px;line-height:10.6px;color:#888;">17</div>
<div class="a" style="left:0px;top:54px;width:379px;height:18px;background:#fff;border-bottom:1px solid #e3e3e3"></div>
<div class="a" style="left:189px;top:54px;width:1px;height:18px;background:#e3e3e3"></div>
<div class="t" style="left:2px;top:58.03px;font-size:10.6px;line-height:10.6px;color:#000;">Name</div>
<div class="t" style="left:192px;top:57.53px;font-size:10.6px;line-height:10.6px;color:#000;">Meter 1</div>
<div class="a" style="left:0px;top:72px;width:379px;height:18px;background:#fff;border-bottom:1px solid #e3e3e3"></div>
<div class="a" style="left:189px;top:72px;width:1px;height:18px;background:#e3e3e3"></div>
<div class="t" style="left:2px;top:76.03px;font-size:10.6px;line-height:10.6px;font-weight:bold;color:#14a2f2;">X Location</div>
<div class="t" style="left:192px;top:75.53px;font-size:10.6px;line-height:10.6px;color:#000;">203</div>
<div class="a" style="left:0px;top:90px;width:379px;height:18px;background:#fff;border-bottom:1px solid #e3e3e3"></div>
<div class="a" style="left:189px;top:90px;width:1px;height:18px;background:#e3e3e3"></div>
<div class="t" style="left:2px;top:94.03px;font-size:10.6px;line-height:10.6px;font-weight:bold;color:#14a2f2;">Y Location</div>
<div class="t" style="left:192px;top:93.53px;font-size:10.6px;line-height:10.6px;color:#000;">71</div>
<div class="a" style="left:0px;top:108px;width:379px;height:18px;background:#fff;border-bottom:1px solid #e3e3e3"></div>
<div class="a" style="left:189px;top:108px;width:1px;height:18px;background:#e3e3e3"></div>
<div class="t" style="left:2px;top:112.03px;font-size:10.6px;line-height:10.6px;color:#000;">Width</div>
<div class="t" style="left:192px;top:111.53px;font-size:10.6px;line-height:10.6px;color:#000;">150</div>
<div class="a" style="left:0px;top:126px;width:379px;height:18px;background:#fff;border-bottom:1px solid #e3e3e3"></div>
<div class="a" style="left:189px;top:126px;width:1px;height:18px;background:#e3e3e3"></div>
<div class="t" style="left:2px;top:130.03px;font-size:10.6px;line-height:10.6px;color:#000;">Height</div>
<div class="t" style="left:192px;top:129.53px;font-size:10.6px;line-height:10.6px;color:#000;">150</div>
<div class="a" style="left:0px;top:144px;width:379px;height:18px;background:#d5d5d5"></div>
<svg class="a" style="left:1px;top:148px;" width="9" height="9" viewBox="0 0 9 9"><defs><linearGradient id="pg2" x1="0" y1="0" x2="0" y2="1"><stop offset="0" stop-color="#fff"/><stop offset="1" stop-color="#e0e0e0"/></linearGradient></defs><rect x="0.5" y="0.5" width="8" height="8" rx="1" fill="url(#pg2)" stroke="#999"/><path d="M2 4.5h5" stroke="#3a55a8" stroke-width="1.1"/></svg>
<div class="t" style="left:12px;top:148.03px;font-size:10.6px;line-height:10.6px;color:#000;">Dependency</div>
<div class="a" style="left:0px;top:162px;width:379px;height:18px;background:#fff;border-bottom:1px solid #e3e3e3"></div>
<div class="a" style="left:189px;top:162px;width:1px;height:18px;background:#e3e3e3"></div>
<div class="t" style="left:2px;top:166.03px;font-size:10.6px;line-height:10.6px;color:#000;">Dependency</div>
<div class="a" style="left:190px;top:163px;width:188px;height:17px;background:#e1e1e1;border:1px solid #adadad"></div>
<div class="t" style="left:192px;top:165.03px;font-size:10.6px;line-height:10.6px;color:#000;">None</div>
<svg class="a" style="left:364px;top:171.0px;" width="9" height="5" viewBox="0 0 9 5"><path d="M0.5 0.5L4.5 4.5L8.5 0.5" fill="none" stroke="#333" stroke-width="1.1"/></svg>
<div class="a" style="left:0px;top:180px;width:379px;height:18px;background:#fff;border-bottom:1px solid #e3e3e3"></div>
<div class="a" style="left:189px;top:180px;width:1px;height:18px;background:#e3e3e3"></div>
<div class="t" style="left:2px;top:184.03px;font-size:10.6px;line-height:10.6px;color:#a0a0a0;">Unit Group</div>
<div class="t" style="left:192px;top:183.53px;font-size:10.6px;line-height:10.6px;color:#888;">Area</div>
<div class="a" style="left:0px;top:198px;width:379px;height:18px;background:#d5d5d5"></div>
<svg class="a" style="left:1px;top:202px;" width="9" height="9" viewBox="0 0 9 9"><defs><linearGradient id="pg2" x1="0" y1="0" x2="0" y2="1"><stop offset="0" stop-color="#fff"/><stop offset="1" stop-color="#e0e0e0"/></linearGradient></defs><rect x="0.5" y="0.5" width="8" height="8" rx="1" fill="url(#pg2)" stroke="#999"/><path d="M2 4.5h5" stroke="#3a55a8" stroke-width="1.1"/></svg>
<div class="t" style="left:12px;top:202.03px;font-size:10.6px;line-height:10.6px;color:#000;">Variable References</div>
<div class="a" style="left:0px;top:216px;width:379px;height:18px;background:#fff;border-bottom:1px solid #e3e3e3"></div>
<div class="a" style="left:189px;top:216px;width:1px;height:18px;background:#e3e3e3"></div>
<div class="t" style="left:2px;top:220.03px;font-size:10.6px;line-height:10.6px;color:#000;">Variable Reference</div>
<div class="t" style="left:192px;top:219.53px;font-size:10.6px;line-height:10.6px;color:#000;">None</div>
<div class="a" style="left:364px;top:217px;width:14px;height:16px;background:linear-gradient(#f6f6f6,#dedede);border:1px solid #b0b0b0"></div>
<div class="t" style="left:366.5px;top:220.96px;font-size:9.5px;line-height:9.5px;color:#222;">...</div>
<div class="a" style="left:0px;top:234px;width:379px;height:18px;background:#fff;border-bottom:1px solid #e3e3e3"></div>
<div class="a" style="left:189px;top:234px;width:1px;height:18px;background:#e3e3e3"></div>
<div class="t" style="left:2px;top:238.03px;font-size:10.6px;line-height:10.6px;color:#000;">Min Value Variable Reference</div>
<div class="t" style="left:192px;top:237.53px;font-size:10.6px;line-height:10.6px;color:#000;">None</div>
<div class="a" style="left:364px;top:235px;width:14px;height:16px;background:linear-gradient(#f6f6f6,#dedede);border:1px solid #b0b0b0"></div>
<div class="t" style="left:366.5px;top:238.96px;font-size:9.5px;line-height:9.5px;color:#222;">...</div>
<div class="a" style="left:0px;top:252px;width:379px;height:18px;background:#fff;border-bottom:1px solid #e3e3e3"></div>
<div class="a" style="left:189px;top:252px;width:1px;height:18px;background:#e3e3e3"></div>
<div class="t" style="left:2px;top:256.03px;font-size:10.6px;line-height:10.6px;color:#000;">Max Value Variable Reference</div>
<div class="t" style="left:192px;top:255.53px;font-size:10.6px;line-height:10.6px;color:#000;">None</div>
<div class="a" style="left:364px;top:253px;width:14px;height:16px;background:linear-gradient(#f6f6f6,#dedede);border:1px solid #b0b0b0"></div>
<div class="t" style="left:366.5px;top:256.96px;font-size:9.5px;line-height:9.5px;color:#222;">...</div>
<div class="a" style="left:0px;top:270px;width:379px;height:18px;background:#fff;border-bottom:1px solid #e3e3e3"></div>
<div class="a" style="left:189px;top:270px;width:1px;height:18px;background:#e3e3e3"></div>
<div class="t" style="left:2px;top:274.03px;font-size:10.6px;line-height:10.6px;color:#000;">Bit Mask</div>
<div class="t" style="left:192px;top:273.53px;font-size:10.6px;line-height:10.6px;color:#000;">0xffffffff</div>
<div class="a" style="left:364px;top:271px;width:14px;height:16px;background:linear-gradient(#f6f6f6,#dedede);border:1px solid #b0b0b0"></div>
<div class="t" style="left:366.5px;top:274.96px;font-size:9.5px;line-height:9.5px;color:#222;">...</div>
<div class="a" style="left:0px;top:288px;width:379px;height:18px;background:#d5d5d5"></div>
<svg class="a" style="left:1px;top:292px;" width="9" height="9" viewBox="0 0 9 9"><defs><linearGradient id="pg2" x1="0" y1="0" x2="0" y2="1"><stop offset="0" stop-color="#fff"/><stop offset="1" stop-color="#e0e0e0"/></linearGradient></defs><rect x="0.5" y="0.5" width="8" height="8" rx="1" fill="url(#pg2)" stroke="#999"/><path d="M2 4.5h5" stroke="#3a55a8" stroke-width="1.1"/></svg>
<div class="t" style="left:12px;top:292.03px;font-size:10.6px;line-height:10.6px;color:#000;">Skin Properties</div>
<div class="a" style="left:0px;top:306px;width:379px;height:18px;background:#fff;border-bottom:1px solid #e3e3e3"></div>
<div class="a" style="left:189px;top:306px;width:1px;height:18px;background:#e3e3e3"></div>
<div class="t" style="left:2px;top:310.03px;font-size:10.6px;line-height:10.6px;color:#000;">Theme Template</div>
<div class="a" style="left:190px;top:307px;width:188px;height:17px;background:#e1e1e1;border:1px solid #adadad"></div>
<div class="t" style="left:192px;top:309.03px;font-size:10.6px;line-height:10.6px;color:#000;">modern_dark</div>
<svg class="a" style="left:364px;top:315.0px;" width="9" height="5" viewBox="0 0 9 5"><path d="M0.5 0.5L4.5 4.5L8.5 0.5" fill="none" stroke="#333" stroke-width="1.1"/></svg>
<div class="a" style="left:0px;top:324px;width:379px;height:18px;background:#fff;border-bottom:1px solid #e3e3e3"></div>
<div class="a" style="left:189px;top:324px;width:1px;height:18px;background:#e3e3e3"></div>
<div class="t" style="left:2px;top:328.03px;font-size:10.6px;line-height:10.6px;color:#000;">Background Color</div>
<div class="a" style="left:194px;top:327.5px;width:11px;height:11px;background:#555;border:1px solid #222"></div>
<div class="t" style="left:210.5px;top:328.03px;font-size:10.6px;line-height:10.6px;color:#000;">255,85,85,85</div>
<div class="a" style="left:364px;top:325px;width:14px;height:16px;background:linear-gradient(#f6f6f6,#dedede);border:1px solid #b0b0b0"></div>
<div class="t" style="left:366.5px;top:328.96px;font-size:9.5px;line-height:9.5px;color:#222;">...</div>
<div class="a" style="left:0px;top:342px;width:379px;height:18px;background:#fff;border-bottom:1px solid #e3e3e3"></div>
<div class="a" style="left:189px;top:342px;width:1px;height:18px;background:#e3e3e3"></div>
<div class="t" style="left:2px;top:346.03px;font-size:10.6px;line-height:10.6px;color:#000;">Background Image</div>
<div class="t" style="left:192px;top:345.53px;font-size:10.6px;line-height:10.6px;color:#000;"></div>
<div class="a" style="left:364px;top:343px;width:14px;height:16px;background:linear-gradient(#f6f6f6,#dedede);border:1px solid #b0b0b0"></div>
<div class="t" style="left:366.5px;top:346.96px;font-size:9.5px;line-height:9.5px;color:#222;">...</div>
<div class="a" style="left:0px;top:360px;width:379px;height:18px;background:#fff;border-bottom:1px solid #e3e3e3"></div>
<div class="a" style="left:189px;top:360px;width:1px;height:18px;background:#e3e3e3"></div>
<div class="t" style="left:2px;top:364.03px;font-size:10.6px;line-height:10.6px;color:#000;">Draw Border</div>
<div class="a" style="left:194px;top:362px;width:13px;height:13px;background:#fff;border:1px solid #333"></div>
<svg class="a" style="left:195px;top:363px;" width="11" height="11" viewBox="0 0 11 11"><path d="M2 5.5l2.5 3L9.5 2" fill="none" stroke="#333" stroke-width="1.2"/></svg>
<div class="a" style="left:0px;top:378px;width:379px;height:18px;background:#fff;border-bottom:1px solid #e3e3e3"></div>
<div class="a" style="left:189px;top:378px;width:1px;height:18px;background:#e3e3e3"></div>
<div class="t" style="left:2px;top:382.03px;font-size:10.6px;line-height:10.6px;color:#000;">Border Width</div>
<div class="t" style="left:192px;top:381.53px;font-size:10.6px;line-height:10.6px;color:#000;">3</div>
<div class="a" style="left:0px;top:396px;width:379px;height:18px;background:#fff;border-bottom:1px solid #e3e3e3"></div>
<div class="a" style="left:189px;top:396px;width:1px;height:18px;background:#e3e3e3"></div>
<div class="t" style="left:2px;top:400.03px;font-size:10.6px;line-height:10.6px;color:#000;">Border Image</div>
<div class="t" style="left:192px;top:399.53px;font-size:10.6px;line-height:10.6px;color:#000;"></div>
<div class="a" style="left:364px;top:397px;width:14px;height:16px;background:linear-gradient(#f6f6f6,#dedede);border:1px solid #b0b0b0"></div>
<div class="t" style="left:366.5px;top:400.96px;font-size:9.5px;line-height:9.5px;color:#222;">...</div>
</div>
<div class="a" style="left:1501px;top:890px;width:396px;height:1px;background:#a0a0a0"></div>
<div class="t" style="left:1503px;top:899.43px;font-size:11.3px;line-height:11.3px;font-weight:bold;color:#000;">Meter 1 [49]</div>
<svg class="a" style="left:1876px;top:896px;" width="15" height="15" viewBox="0 0 15 15"><circle cx="7.5" cy="7.5" r="7.2" fill="#a8a8a8"/><text x="7.5" y="11.5" text-anchor="middle" font-family="Liberation Sans" font-weight="bold" font-size="10" fill="#ddd">?</text></svg>
<div class="a" style="left:1782px;top:958px;width:1px;height:14px;background:#b0b0b0"></div>
<div class="a" style="left:1893px;top:958px;width:1px;height:14px;background:#b0b0b0"></div>
<div class="a" style="left:431px;top:732px;width:258px;height:20px;background:#fff;border:1px solid #abadb3"></div>
<svg class="a" style="left:692px;top:728px;" width="12" height="12" viewBox="0 0 12 12"><circle cx="4.5" cy="4.5" r="3.3" fill="none" stroke="#1e78d0" stroke-width="1.6"/><path d="M7 7l4 4" stroke="#1e78d0" stroke-width="2"/></svg>
<div class="t" style="left:694px;top:741.52px;font-size:11.2px;line-height:11.2px;font-weight:bold;color:#000;transform:scaleX(1.33);transform-origin:0 0">Var</div>
<div class="a" style="left:732px;top:736px;width:13px;height:13px;background:#fff;border:1px solid #333"></div>
<div class="t" style="left:746.5px;top:736.60px;font-size:10.75px;line-height:10.75px;color:#000;">Hide pre-defined variables</div>
<svg class="a" style="left:398px;top:763px;" width="30" height="12" viewBox="0 0 30 12"><circle cx="7" cy="6.5" r="4.3" fill="#0a6fc0"/><path d="M4.8 6.5h4.4" stroke="#fff" stroke-width="1.3"/><path d="M7 4.3v4.4" stroke="#fff" stroke-width="1.3"/></svg>
<div class="t" style="left:401.5px;top:774.89px;font-size:11px;line-height:11px;font-weight:bold;color:#000;transform:scaleX(1.3);transform-origin:0 0">Var</div>
<svg class="a" style="left:398px;top:793px;" width="30" height="12" viewBox="0 0 30 12"><circle cx="7.5" cy="6.5" r="4.3" fill="#999"/><path d="M5.3 6.5h4.4" stroke="#fff" stroke-width="1.3"/></svg>
<div class="t" style="left:401.5px;top:805.09px;font-size:11px;line-height:11px;font-weight:bold;color:#999;transform:scaleX(1.3);transform-origin:0 0">Var</div>
<svg class="a" style="left:400px;top:824px;" width="20" height="12" viewBox="0 0 20 12"><path d="M1 6.5C4 2 12 2 15 6.5C12 11 4 11 1 6.5z" fill="#0a6fc0"/><circle cx="8" cy="6.5" r="2.5" fill="#fff"/><circle cx="8" cy="6.5" r="1.4" fill="#000"/></svg>
<div class="t" style="left:401.5px;top:835.69px;font-size:11px;line-height:11px;font-weight:bold;color:#000;transform:scaleX(1.3);transform-origin:0 0">Var</div>
<svg class="a" style="left:400px;top:854px;" width="28" height="26" viewBox="0 0 28 26"><circle cx="6.6" cy="5.7" r="4.3" fill="#0a6fc0"/><path d="M4.3999999999999995 5.7h4.4" stroke="#fff" stroke-width="1.3"/><path d="M6.6 3.5v4.4" stroke="#fff" stroke-width="1.3"/><circle cx="20.2" cy="5.7" r="4.3" fill="#0a6fc0"/><path d="M18.0 5.7h4.4" stroke="#fff" stroke-width="1.3"/><rect x="5" y="9" width="17" height="14.5" rx="1" fill="#000"/><g fill="#fff"><rect x="6.5" y="12" width="4" height="2.5"/><rect x="11.5" y="12" width="4" height="2.5"/><rect x="16.5" y="12" width="4" height="2.5"/><rect x="6.5" y="19.5" width="4" height="2.5"/><rect x="11.5" y="19.5" width="4" height="2.5"/><rect x="16.5" y="19.5" width="4" height="2.5"/></g><g fill="#0a6fc0"><rect x="6.5" y="15.5" width="4" height="3"/><rect x="11.5" y="15.5" width="4" height="3"/><rect x="16.5" y="15.5" width="4" height="3"/></g></svg>
<svg class="a" style="left:401px;top:883px;" width="14" height="14" viewBox="0 0 14 14"><circle cx="6.6" cy="6.8" r="4.8" fill="none" stroke="#0a6fc0" stroke-width="2.6" stroke-dasharray="2 1.77"/><circle cx="6.6" cy="6.8" r="3.3" fill="none" stroke="#0a6fc0" stroke-width="2"/></svg>
<div class="t" style="left:401.5px;top:894.59px;font-size:11px;line-height:11px;font-weight:bold;color:#000;transform:scaleX(1.3);transform-origin:0 0">Var</div>
<div class="a" style="left:431px;top:765px;width:1054px;height:175px;border:1px solid #8c8c8c;background:#fff"></div>
<div class="a" style="left:1466px;top:766px;width:18px;height:173px;background:#f0f0f0"></div>
<div class="t" style="left:436.5px;top:774.10px;font-size:10.75px;line-height:10.75px;color:#000;">Group Name</div>
<div class="a" style="left:604px;top:766px;width:1px;height:25px;background:#e5e5e5"></div>
<div class="t" style="left:609.5px;top:774.10px;font-size:10.75px;line-height:10.75px;color:#000;">Name</div>
<div class="a" style="left:776px;top:766px;width:1px;height:25px;background:#e5e5e5"></div>
<div class="t" style="left:781.5px;top:774.10px;font-size:10.75px;line-height:10.75px;color:#000;">Length (Bits)</div>
<div class="a" style="left:949px;top:766px;width:1px;height:25px;background:#e5e5e5"></div>
<div class="t" style="left:954.5px;top:774.10px;font-size:10.75px;line-height:10.75px;color:#000;">Index</div>
<div class="a" style="left:1121px;top:766px;width:1px;height:25px;background:#e5e5e5"></div>
<div class="t" style="left:1126.5px;top:774.10px;font-size:10.75px;line-height:10.75px;color:#000;">SubIndex</div>
<div class="a" style="left:1294px;top:766px;width:1px;height:25px;background:#e5e5e5"></div>
<div class="t" style="left:1299.5px;top:774.10px;font-size:10.75px;line-height:10.75px;color:#000;">Owner</div>
<svg class="a" style="left:513px;top:766px;" width="10" height="6" viewBox="0 0 10 6"><path d="M0.5 5L5 0.8 9.5 5" fill="none" stroke="#555" stroke-width="1"/></svg>
<div class="a" style="left:432px;top:790px;width:1034px;height:1px;background:#8c8c8c"></div>
<div class="a" style="left:432px;top:791px;width:862px;height:24px;background:#0078d7"></div>
<div class="a" style="left:432px;top:815px;width:1034px;height:1px;background:#8c8c8c"></div>
<div class="a" style="left:604px;top:791px;width:1px;height:25px;background:#8c8c8c"></div>
<div class="a" style="left:776px;top:791px;width:1px;height:25px;background:#8c8c8c"></div>
<div class="a" style="left:949px;top:791px;width:1px;height:25px;background:#8c8c8c"></div>
<div class="a" style="left:1121px;top:791px;width:1px;height:25px;background:#8c8c8c"></div>
<div class="a" style="left:1294px;top:791px;width:1px;height:25px;background:#8c8c8c"></div>
<div class="t" style="left:432.5px;top:797.50px;font-size:10.75px;line-height:10.75px;color:#fff;">Alarms</div>
<div class="t" style="left:605.5px;top:797.50px;font-size:10.75px;line-height:10.75px;color:#fff;">@AlarmCurrent</div>
<div class="t" style="left:777.5px;top:797.50px;font-size:10.75px;line-height:10.75px;color:#fff;">16</div>
<div class="t" style="left:950.5px;top:797.50px;font-size:10.75px;line-height:10.75px;color:#fff;">0x2430</div>
<div class="t" style="left:1122.5px;top:797.50px;font-size:10.75px;line-height:10.75px;color:#fff;">0x02</div>
<div class="a" style="left:1294px;top:791px;width:172px;height:25px;background:#e1e1e1;border:2px solid #959595"></div>
<div class="t" style="left:1298px;top:797.50px;font-size:10.75px;line-height:10.75px;color:#f4f4f4;">PClient</div>
<svg class="a" style="left:1452px;top:802.0px;" width="9" height="5" viewBox="0 0 9 5"><path d="M0.5 0.5L4.5 4.5L8.5 0.5" fill="none" stroke="#333" stroke-width="1.1"/></svg>
<div class="a" style="left:432px;top:840px;width:1034px;height:1px;background:#8c8c8c"></div>
<div class="a" style="left:604px;top:816px;width:1px;height:25px;background:#8c8c8c"></div>
<div class="a" style="left:776px;top:816px;width:1px;height:25px;background:#8c8c8c"></div>
<div class="a" style="left:949px;top:816px;width:1px;height:25px;background:#8c8c8c"></div>
<div class="a" style="left:1121px;top:816px;width:1px;height:25px;background:#8c8c8c"></div>
<div class="a" style="left:1294px;top:816px;width:1px;height:25px;background:#8c8c8c"></div>
<div class="t" style="left:432.5px;top:822.50px;font-size:10.75px;line-height:10.75px;color:#000;">Alarms</div>
<div class="t" style="left:605.5px;top:822.50px;font-size:10.75px;line-height:10.75px;color:#000;">@AlarmCurrentPriority</div>
<div class="t" style="left:777.5px;top:822.50px;font-size:10.75px;line-height:10.75px;color:#000;">8</div>
<div class="t" style="left:950.5px;top:822.50px;font-size:10.75px;line-height:10.75px;color:#000;">0x2430</div>
<div class="t" style="left:1122.5px;top:822.50px;font-size:10.75px;line-height:10.75px;color:#000;">0x05</div>
<div class="a" style="left:1294px;top:816px;width:172px;height:25px;background:#e1e1e1;border:2px solid #959595"></div>
<div class="t" style="left:1298px;top:822.50px;font-size:10.75px;line-height:10.75px;color:#000;">PClient</div>
<svg class="a" style="left:1452px;top:827.0px;" width="9" height="5" viewBox="0 0 9 5"><path d="M0.5 0.5L4.5 4.5L8.5 0.5" fill="none" stroke="#333" stroke-width="1.1"/></svg>
<div class="a" style="left:432px;top:865px;width:1034px;height:1px;background:#8c8c8c"></div>
<div class="a" style="left:604px;top:841px;width:1px;height:25px;background:#8c8c8c"></div>
<div class="a" style="left:776px;top:841px;width:1px;height:25px;background:#8c8c8c"></div>
<div class="a" style="left:949px;top:841px;width:1px;height:25px;background:#8c8c8c"></div>
<div class="a" style="left:1121px;top:841px;width:1px;height:25px;background:#8c8c8c"></div>
<div class="a" style="left:1294px;top:841px;width:1px;height:25px;background:#8c8c8c"></div>
<div class="t" style="left:432.5px;top:847.50px;font-size:10.75px;line-height:10.75px;color:#000;">Alarms</div>
<div class="t" style="left:605.5px;top:847.50px;font-size:10.75px;line-height:10.75px;color:#000;">@AlarmEnqueued</div>
<div class="t" style="left:777.5px;top:847.50px;font-size:10.75px;line-height:10.75px;color:#000;">16</div>
<div class="t" style="left:950.5px;top:847.50px;font-size:10.75px;line-height:10.75px;color:#000;">0x2430</div>
<div class="t" style="left:1122.5px;top:847.50px;font-size:10.75px;line-height:10.75px;color:#000;">0x04</div>
<div class="a" style="left:1294px;top:841px;width:172px;height:25px;background:#e1e1e1;border:2px solid #959595"></div>
<div class="t" style="left:1298px;top:847.50px;font-size:10.75px;line-height:10.75px;color:#000;">PClient</div>
<svg class="a" style="left:1452px;top:852.0px;" width="9" height="5" viewBox="0 0 9 5"><path d="M0.5 0.5L4.5 4.5L8.5 0.5" fill="none" stroke="#333" stroke-width="1.1"/></svg>
<div class="a" style="left:432px;top:890px;width:1034px;height:1px;background:#8c8c8c"></div>
<div class="a" style="left:604px;top:866px;width:1px;height:25px;background:#8c8c8c"></div>
<div class="a" style="left:776px;top:866px;width:1px;height:25px;background:#8c8c8c"></div>
<div class="a" style="left:949px;top:866px;width:1px;height:25px;background:#8c8c8c"></div>
<div class="a" style="left:1121px;top:866px;width:1px;height:25px;background:#8c8c8c"></div>
<div class="a" style="left:1294px;top:866px;width:1px;height:25px;background:#8c8c8c"></div>
<div class="t" style="left:432.5px;top:872.50px;font-size:10.75px;line-height:10.75px;color:#000;">Alarms</div>
<div class="t" style="left:605.5px;top:872.50px;font-size:10.75px;line-height:10.75px;color:#000;">@AlarmShow</div>
<div class="t" style="left:777.5px;top:872.50px;font-size:10.75px;line-height:10.75px;color:#000;">16</div>
<div class="t" style="left:950.5px;top:872.50px;font-size:10.75px;line-height:10.75px;color:#000;">0x2430</div>
<div class="t" style="left:1122.5px;top:872.50px;font-size:10.75px;line-height:10.75px;color:#000;">0x01</div>
<div class="a" style="left:1294px;top:866px;width:172px;height:25px;background:#e1e1e1;border:2px solid #959595"></div>
<div class="t" style="left:1298px;top:872.50px;font-size:10.75px;line-height:10.75px;color:#000;">PClient</div>
<svg class="a" style="left:1452px;top:877.0px;" width="9" height="5" viewBox="0 0 9 5"><path d="M0.5 0.5L4.5 4.5L8.5 0.5" fill="none" stroke="#333" stroke-width="1.1"/></svg>
<div class="a" style="left:432px;top:915px;width:1034px;height:1px;background:#8c8c8c"></div>
<div class="a" style="left:604px;top:891px;width:1px;height:25px;background:#8c8c8c"></div>
<div class="a" style="left:776px;top:891px;width:1px;height:25px;background:#8c8c8c"></div>
<div class="a" style="left:949px;top:891px;width:1px;height:25px;background:#8c8c8c"></div>
<div class="a" style="left:1121px;top:891px;width:1px;height:25px;background:#8c8c8c"></div>
<div class="a" style="left:1294px;top:891px;width:1px;height:25px;background:#8c8c8c"></div>
<div class="t" style="left:432.5px;top:897.50px;font-size:10.75px;line-height:10.75px;color:#000;">Alarms</div>
<div class="t" style="left:605.5px;top:897.50px;font-size:10.75px;line-height:10.75px;color:#000;">@IsAlarmEnqueued</div>
<div class="t" style="left:777.5px;top:897.50px;font-size:10.75px;line-height:10.75px;color:#000;">16</div>
<div class="t" style="left:950.5px;top:897.50px;font-size:10.75px;line-height:10.75px;color:#000;">0x2430</div>
<div class="t" style="left:1122.5px;top:897.50px;font-size:10.75px;line-height:10.75px;color:#000;">0x03</div>
<div class="a" style="left:1294px;top:891px;width:172px;height:25px;background:#e1e1e1;border:2px solid #959595"></div>
<div class="t" style="left:1298px;top:897.50px;font-size:10.75px;line-height:10.75px;color:#000;">PClient</div>
<svg class="a" style="left:1452px;top:902.0px;" width="9" height="5" viewBox="0 0 9 5"><path d="M0.5 0.5L4.5 4.5L8.5 0.5" fill="none" stroke="#333" stroke-width="1.1"/></svg>
<div class="a" style="left:604px;top:916px;width:1px;height:23px;background:#8c8c8c"></div>
<div class="a" style="left:776px;top:916px;width:1px;height:23px;background:#8c8c8c"></div>
<div class="a" style="left:949px;top:916px;width:1px;height:23px;background:#8c8c8c"></div>
<div class="a" style="left:1121px;top:916px;width:1px;height:23px;background:#8c8c8c"></div>
<div class="a" style="left:1294px;top:916px;width:1px;height:23px;background:#8c8c8c"></div>
<div class="t" style="left:432.5px;top:922.50px;font-size:10.75px;line-height:10.75px;color:#000;">Analog Inputs</div>
<div class="t" style="left:605.5px;top:922.50px;font-size:10.75px;line-height:10.75px;color:#000;">@AnalogInput01</div>
<div class="t" style="left:777.5px;top:922.50px;font-size:10.75px;line-height:10.75px;color:#000;">32</div>
<div class="t" style="left:950.5px;top:922.50px;font-size:10.75px;line-height:10.75px;color:#000;">0x2090</div>
<div class="t" style="left:1122.5px;top:922.50px;font-size:10.75px;line-height:10.75px;color:#000;">0x01</div>
<div class="a" style="left:1294px;top:916px;width:172px;height:23px;background:#e1e1e1;border:2px solid #959595"></div>
<div class="t" style="left:1298px;top:922.50px;font-size:10.75px;line-height:10.75px;color:#000;">Hardware Daemon</div>
<svg class="a" style="left:1452px;top:927.0px;" width="9" height="5" viewBox="0 0 9 5"><path d="M0.5 0.5L4.5 4.5L8.5 0.5" fill="none" stroke="#333" stroke-width="1.1"/></svg>
<svg class="a" style="left:1471.5px;top:798.0px;" width="9" height="5" viewBox="0 0 9 5"><path d="M0.5 4.5L4.5 0.5L8.5 4.5" fill="none" stroke="#444" stroke-width="1.8"/></svg>
<div class="a" style="left:1468px;top:808px;width:15px;height:11px;background:#cdcdcd"></div>
<svg class="a" style="left:1471.5px;top:928.0px;" width="9" height="5" viewBox="0 0 9 5"><path d="M0.5 0.5L4.5 4.5L8.5 0.5" fill="none" stroke="#444" stroke-width="1.8"/></svg>
<div class="a" style="left:391px;top:84px;width:1104px;height:1px;background:#8a8e99"></div>
<div class="a" style="left:390px;top:65px;width:123px;height:20px;background:linear-gradient(#eaf2fb,#dce9f8);border:1px solid #3d7ab8;border-bottom:none"></div>
<div class="t" style="left:397.5px;top:68.94px;font-size:10.7px;line-height:10.7px;color:#000;">Gauges Page [41]</div>
<svg class="a" style="left:500px;top:69.5px;" width="9" height="9" viewBox="0 0 9 9"><path d="M0.5 0.5L8.5 8.5M8.5 0.5L0.5 8.5" stroke="#444" stroke-width="1.3"/></svg>
<svg class="a" style="left:1431px;top:67px;" width="7" height="11" viewBox="0 0 7 11"><path d="M6 0.5V10L0.5 5.2z" fill="#c8c8c8"/></svg>
<svg class="a" style="left:1449px;top:67px;" width="7" height="11" viewBox="0 0 7 11"><path d="M0.5 0.5V10L6 5.2z" fill="#c8c8c8"/></svg>
<svg class="a" style="left:1464px;top:69px;" width="12" height="6" viewBox="0 0 12 6"><path d="M0.5 0.5h10.5L5.7 5.5z" fill="#505050"/></svg>
<svg class="a" style="left:1482px;top:67px;" width="12" height="10" viewBox="0 0 12 10"><rect x="1" y="1" width="9.5" height="7.5" fill="none" stroke="#505050" stroke-width="1.4"/><rect x="1" y="1" width="9.5" height="1.5" fill="#505050"/></svg>
<svg class="a" style="left:395.7px;top:90px;" width="16" height="17" viewBox="0 0 16 17"><circle cx="6" cy="6" r="5" fill="#eef4fb" stroke="#333" stroke-width="1.2"/><path d="M3.2 6h5.6" stroke="#2a3a4a" stroke-width="1.1"/><path d="M6 3.2v5.6" stroke="#2a3a4a" stroke-width="1.1"/><path d="M9.5 9.5l5 5" stroke="#222" stroke-width="2.2"/></svg>
<svg class="a" style="left:418.7px;top:90px;" width="16" height="17" viewBox="0 0 16 17"><circle cx="6" cy="6" r="5" fill="#eef4fb" stroke="#333" stroke-width="1.2"/><path d="M3.2 6h5.6" stroke="#2a3a4a" stroke-width="1.1"/><path d="M9.5 9.5l5 5" stroke="#222" stroke-width="2.2"/></svg>
<svg class="a" style="left:442px;top:91px;" width="15" height="15" viewBox="0 0 15 15"><rect x="0.5" y="0.5" width="14" height="14" fill="#dce8f4" stroke="#667" stroke-width="1"/><path d="M7.5 2.5v10M2.5 7.5h10M5.8 4.2l1.7-1.7 1.7 1.7M5.8 10.8l1.7 1.7 1.7-1.7M4.2 5.8l-1.7 1.7 1.7 1.7M10.8 5.8l1.7 1.7-1.7 1.7" fill="none" stroke="#445" stroke-width="0.9"/></svg>
<div class="a" style="left:463px;top:88px;width:1px;height:24px;background:#777"></div>
<svg class="a" style="left:471px;top:91px;" width="16" height="16" viewBox="0 0 16 16"><path d="M1 0v16M15 0v16" stroke="#a0a0a0" stroke-width="1.2" stroke-dasharray="2 1"/><rect x="1" y="2" width="7" height="5" fill="#a0a0a0"/><rect x="1" y="9" width="14" height="5" fill="#a0a0a0"/></svg>
<svg class="a" style="left:494px;top:91px;" width="16" height="16" viewBox="0 0 16 16"><path d="M1 0v16" stroke="#a0a0a0" stroke-width="1.2" stroke-dasharray="2 1"/><path d="M15 0v16" stroke="#a0a0a0" stroke-width="1.5"/><rect x="8" y="2" width="7" height="5" fill="#a0a0a0"/><rect x="1" y="9" width="14" height="5" fill="#a0a0a0"/></svg>
<svg class="a" style="left:517px;top:91px;" width="16" height="16" viewBox="0 0 16 16"><path d="M8 0v16" stroke="#a0a0a0" stroke-width="1.2"/><rect x="4" y="2" width="8" height="5" fill="#a0a0a0"/><rect x="1" y="9" width="14" height="5" fill="#a0a0a0"/></svg>
<svg class="a" style="left:540px;top:91px;" width="16" height="16" viewBox="0 0 16 16"><path d="M0 1h16" stroke="#a0a0a0" stroke-width="1.5"/><path d="M0 15h16" stroke="#a0a0a0" stroke-width="1.2" stroke-dasharray="2 1"/><rect x="1" y="1" width="5" height="14" fill="#a0a0a0"/><rect x="9" y="1" width="5" height="7" fill="#a0a0a0"/></svg>
<svg class="a" style="left:563px;top:91px;" width="16" height="16" viewBox="0 0 16 16"><path d="M0 1h16" stroke="#a0a0a0" stroke-width="1.2" stroke-dasharray="2 1"/><path d="M0 15h16" stroke="#a0a0a0" stroke-width="1.5"/><rect x="1" y="1" width="5" height="14" fill="#a0a0a0"/><rect x="9" y="8" width="5" height="7" fill="#a0a0a0"/></svg>
<svg class="a" style="left:587px;top:91px;" width="16" height="16" viewBox="0 0 16 16"><path d="M0 8h16" stroke="#a0a0a0" stroke-width="1.2"/><rect x="1" y="1" width="5" height="14" fill="#a0a0a0"/><rect x="9" y="4" width="5" height="8" fill="#a0a0a0"/></svg>
<div class="a" style="left:607px;top:88px;width:1px;height:24px;background:#777"></div>
<svg class="a" style="left:614px;top:89px;" width="18" height="20" viewBox="0 0 18 20"><path d="M4 1h5v6h3l-5.5 6L1 7h3z" fill="#3d9be9" stroke="#1a4a8a" stroke-width="0.8"/><rect x="1" y="11" width="3" height="7" fill="#fff" stroke="#3a9a30" stroke-width="1.2"/><rect x="13" y="11" width="3" height="7" fill="#fff" stroke="#333" stroke-width="1.2"/></svg>
<svg class="a" style="left:637px;top:89px;" width="18" height="20" viewBox="0 0 18 20"><path d="M9 2l6 6h-3v9H7V8H3z" fill="#3d9be9" stroke="#1a4a8a" stroke-width="0.8"/><rect x="1" y="3" width="3" height="7" fill="#fff" stroke="#333" stroke-width="1.2"/><rect x="14" y="1" width="3" height="7" fill="#fff" stroke="#3a9a30" stroke-width="1.2"/></svg>
<div class="a" style="left:657px;top:88px;width:23px;height:23px;background:#cce4f7;border:1px solid #99c9ef"></div>
<svg class="a" style="left:660px;top:91px;" width="17" height="17" viewBox="0 0 17 17"><rect x="1.5" y="1.5" width="7" height="7" fill="none" stroke="#555" stroke-width="1"/><path d="M9 9l6 6M15 10v5h-5" fill="none" stroke="#e02020" stroke-width="1.6"/></svg>
<svg class="a" style="left:683px;top:91px;" width="17" height="17" viewBox="0 0 17 17"><rect x="1" y="1" width="9" height="9" fill="none" stroke="#666" stroke-width="1.2"/><rect x="3" y="3" width="5" height="5" fill="none" stroke="#888" stroke-width="1"/><path d="M9 9l6 6M15 11v4h-4" fill="none" stroke="#666" stroke-width="1.2"/></svg>
<div class="a" style="left:705px;top:88px;width:1px;height:24px;background:#777"></div>
<svg class="a" style="left:712px;top:91px;" width="17" height="16" viewBox="0 0 17 16"><path d="M1 14h4M1 11h3M1 8h2M5 5h1M8 5v-3M11 5v-3M14 5v-3M5 14V5h11" fill="none" stroke="#222" stroke-width="1.2"/></svg>
<div class="a" style="left:734px;top:88px;width:1px;height:24px;background:#777"></div>
<div class="a" style="left:738px;top:88px;width:22px;height:23px;background:#cce4f7;border:1px solid #99c9ef"></div>
<svg class="a" style="left:738px;top:88px;" width="23" height="22" viewBox="0 0 23 22"><rect x="3.5" y="8.5" width="4" height="5" fill="#fff" stroke="#5a6470" stroke-width="1.3"/><rect x="12.5" y="4.5" width="5" height="5" fill="#fff" stroke="#5a6470" stroke-width="1.3"/><rect x="14.5" y="12.5" width="5" height="5" fill="#fff" stroke="#5a6470" stroke-width="1.3"/><path d="M9 10.5h3M9 14.5h5" stroke="#444" stroke-width="1.2" stroke-dasharray="1 1"/></svg>
<svg class="a" style="left:764px;top:90px;" width="18" height="18" viewBox="0 0 18 18"><path d="M1.5 1v16M1 2.5h16" stroke="#000" stroke-width="1.2" stroke-dasharray="1.2 0.8"/><path d="M3 12.5L7 9v2h5V6h-2l3.5-4 3.5 4h-2v8H7v2z" fill="#000"/></svg>
<div class="t" style="left:783.5px;top:93.82px;font-size:10.85px;line-height:10.85px;color:#777;">Grid Width:</div>
<div class="a" style="left:838px;top:90px;width:80px;height:19px;background:#f0f0f0;border:1px solid #bcbcbc"></div>
<div class="t" style="left:841.7px;top:94.82px;font-size:10.85px;line-height:10.85px;color:#666;">10</div>
<div class="t" style="left:920px;top:93.82px;font-size:10.85px;line-height:10.85px;color:#777;">px</div>
<div class="a" style="left:936px;top:88px;width:1px;height:24px;background:#777"></div>
<div class="a" style="left:942px;top:92px;width:15px;height:13px;background:#cddcf0"></div>
<svg class="a" style="left:942px;top:92px;" width="16" height="13" viewBox="0 0 16 13"><path d="M3 4h5a3.5 3.5 0 0 1 0 7H6" fill="none" stroke="#2a6ac0" stroke-width="2"/><path d="M1 4l4-3v6z" fill="#2a6ac0"/><path d="M12 6.5h3l-1.5 1.5z" fill="#2a6ac0"/></svg>
<div class="a" style="left:965px;top:92px;width:16px;height:13px;background:#cddcf0"></div>
<svg class="a" style="left:965px;top:92px;" width="17" height="13" viewBox="0 0 17 13"><path d="M9 4H5a3.5 3.5 0 0 0 0 7h2" fill="none" stroke="#2a6ac0" stroke-width="2"/><path d="M12 4l-4-3v6z" fill="#2a6ac0"/><path d="M13 6.5h3l-1.5 1.5z" fill="#2a6ac0"/></svg>
<div class="a" style="left:391px;top:116px;width:1104px;height:1px;background:linear-gradient(90deg,#c3d6ef,#c3d6ef 40%,#8a8e99)"></div>
<svg class="a" style="left:391px;top:117px;overflow:hidden" width="1104" height="568" viewBox="391 117 1104 568"><defs><linearGradient id="bodyg" x1="0" y1="116" x2="0" y2="607" gradientUnits="userSpaceOnUse"><stop offset="0" stop-color="#3a3a3a"/><stop offset="0.05" stop-color="#474747"/><stop offset="0.13" stop-color="#3e3e3e"/><stop offset="0.2" stop-color="#3a3a3a"/><stop offset="0.75" stop-color="#2e2e2e"/><stop offset="0.95" stop-color="#262626"/><stop offset="1" stop-color="#1a1a1a"/></linearGradient><linearGradient id="bezg" x1="0" y1="180" x2="0" y2="545" gradientUnits="userSpaceOnUse"><stop offset="0" stop-color="#a8a8a8"/><stop offset="0.5" stop-color="#999"/><stop offset="0.88" stop-color="#c9c9c9"/><stop offset="1" stop-color="#8c8c8c"/></linearGradient><linearGradient id="scrg" x1="533" y1="0" x2="1012" y2="0" gradientUnits="userSpaceOnUse"><stop offset="0" stop-color="#bccde6"/><stop offset="0.45" stop-color="#f4f6fa"/><stop offset="0.6" stop-color="#f2f5fa"/><stop offset="1" stop-color="#bfcfe8"/></linearGradient><linearGradient id="panelg" x1="0" y1="202" x2="0" y2="521" gradientUnits="userSpaceOnUse"><stop offset="0" stop-color="#3c3c3c"/><stop offset="1" stop-color="#323232"/></linearGradient><linearGradient id="bumpg" x1="1217" y1="0" x2="1332" y2="0" gradientUnits="userSpaceOnUse"><stop offset="0" stop-color="#2e2e2e"/><stop offset="0.33" stop-color="#7a7a7a"/><stop offset="0.52" stop-color="#3e3e3e"/><stop offset="0.74" stop-color="#757575"/><stop offset="1" stop-color="#2e2e2e"/></linearGradient><radialGradient id="badgeg" cx="0.45" cy="0.35" r="0.7"><stop offset="0" stop-color="#f04848"/><stop offset="1" stop-color="#d01818"/></radialGradient><filter id="blur2" x="-20%" y="-20%" width="140%" height="140%"><feGaussianBlur stdDeviation="2.2"/></filter></defs><path d="M640 121 Q940 108 1250 126 C1345 128 1372 140 1378 176.5 C1381 190 1383.5 205 1384 225 L1384.5 265 L1384.7 440 L1383 530 C1381 565 1370 585 1346 591 C1320 596 1290 597 1250 597.7 Q880 611 640 602.6 L460 593 C440 592 418 584 408 572 C400 562 397 550 396.5 530 L393.5 290 C394 225 396 192 405 172 C414 150 426 135 460 129.8 Z" fill="url(#bodyg)"/><path d="M480 136 C445 140 420 155 410 185 L404 250" fill="none" stroke="#585858" stroke-width="6" filter="url(#blur2)"/><path d="M1300 134 C1335 138 1360 152 1368 185 L1374 250" fill="none" stroke="#585858" stroke-width="6" filter="url(#blur2)"/><path d="M435 186 Q890 162 1345 186 Q1361 187 1361 203 Q1370 362 1359 522 Q1359 535 1344 535 Q890 563 436 537 Q419 536 419 520 Q407 361 419 203 Q419 187 435 186 Z" fill="#161616" opacity="0.9" filter="url(#blur2)"/><path d="M426 512 Q426 537 440 537.5 Q890 564 1342 535.5 Q1354 535 1354 512 Z" fill="#434343" filter="url(#blur1)"/><path d="M437 193.5 Q890 170 1343 193 Q1353 194 1353 204 Q1364 362 1351 520 Q1351 527 1342 527 Q890 555 438 529 Q427 528 427 518 Q413 361 427 204 Q427 194 437 193.5 Z" fill="url(#bezg)"/><path d="M444 201 Q890 178 1337 200 Q1345 201 1345 209 Q1354 358 1345 506 L435 506 Q425 358 435 210 Q435 202 444 201 Z" fill="#383838"/><path d="M436 506 L1345 506 L1345 519 Q890 543 436 521 Z" fill="#c6c6c6"/><path d="M436 521 Q890 543 1345 519 L1345 522 Q890 548 436 525 Z" fill="#a4a4a4"/><path d="M448 204 L514 204 Q527 204 527 217 L527 507 Q527 519 515 519 L448 519 Q436 519 436 507 L436 216 Q436 204 448 204 Z" fill="#353535"/><path d="M508 206 Q500 360 497 519" fill="none" stroke="#4a4a4a" stroke-width="1.5" opacity="0.8"/><path d="M1033 202 L1331 202 Q1344 202 1344 215 L1344 508 Q1344 521 1331 521 L1033 521 Q1019 521 1019 507 L1019 216 Q1019 202 1033 202 Z" fill="url(#panelg)"/><path d="M1036 205 L1050 519" stroke="#4a4a4a" stroke-width="1.2" opacity="0.7"/><rect x="527" y="217" width="491" height="289" fill="#000"/><rect x="533" y="225" width="480" height="272" fill="url(#scrg)"/><rect x="539" y="231" width="468" height="262" rx="12" fill="#1b1a1d"/><rect x="587" y="239" width="373" height="246" rx="9" fill="url(#scrg)"/><rect x="533" y="281" width="54" height="19" fill="#c3d2e9"/><rect x="960" y="281" width="53" height="19" fill="#c3d2e9"/><rect x="533" y="352" width="54" height="22" fill="#c3d2e9"/><rect x="960" y="352" width="53" height="22" fill="#c3d2e9"/><rect x="533" y="427" width="54" height="17" fill="#c3d2e9"/><rect x="960" y="427" width="53" height="17" fill="#c3d2e9"/><path d="M595 258 Q595 251 602 251 L945 251 Q952 251 952 258 L952 334 A16.5 16.5 0 0 1 919 334 L919 318 L880 318 Q866 318 866 304 L866 272 Q866 259 852 259 L694 259 Q680 259 680 272 L680 304 Q680 318 666 318 L628 318 L628 334 A16.5 16.5 0 0 1 595 334 Z" fill="#1b1a1d" stroke="#8a8a8a" stroke-width="1"/><rect x="601" y="257" width="72" height="55" rx="2" fill="#c2c2c2"/><rect x="874" y="257" width="72" height="55" rx="2" fill="#c2c2c2"/><text x="930" y="272" font-family="Liberation Sans" font-weight="bold" font-size="7" fill="#555">c</text><text x="926" y="288" font-family="Liberation Sans" font-weight="bold" font-size="6.5" fill="#555">FM</text><path d="M927 300h3l3-3v9l-3-3h-3z" fill="#555"/><circle cx="669" cy="400" r="64.5" fill="#1b1a1d" stroke="#8a8a8a" stroke-width="1.5"/><path d="M618 424 A56 56 0 0 1 652.4 347.2 L634 372 L628.5 394 L630 416 Z" fill="#fff"/><path d="M625.1 365.3 A56 56 0 0 1 652.4 347.2 L632 371 Z" fill="#e0001a"/><path d="M627 437 A56 56 0 0 0 712.6 437 L695.7 426.8 L679 437.7 L660 438 L643 429.4 Z" fill="#fff"/><path d="M684.6 454 A56 56 0 0 0 712.6 437 L695.7 426.8 L679.5 437.7 Z" fill="#e0001a"/><path d="M652.4 347.2 L654.5 365.7 L639 377 L631 394.6 L632.7 414" fill="none" stroke="#aaa" stroke-width="1"/><circle cx="632.7" cy="414" r="3" fill="#1b1a1d" stroke="#bbb" stroke-width="1.2"/><circle cx="631" cy="394.6" r="3" fill="#1b1a1d" stroke="#bbb" stroke-width="1.2"/><circle cx="639" cy="377" r="3" fill="#1b1a1d" stroke="#bbb" stroke-width="1.2"/><circle cx="654.5" cy="365.7" r="3" fill="#1b1a1d" stroke="#bbb" stroke-width="1.2"/><circle cx="643" cy="429.4" r="3" fill="#1b1a1d" stroke="#bbb" stroke-width="1.2"/><circle cx="660" cy="438" r="3" fill="#1b1a1d" stroke="#bbb" stroke-width="1.2"/><circle cx="679" cy="437.7" r="3" fill="#1b1a1d" stroke="#bbb" stroke-width="1.2"/><circle cx="695.7" cy="426.8" r="3" fill="#1b1a1d" stroke="#bbb" stroke-width="1.2"/><circle cx="658" cy="394.5" r="7.5" fill="#a0a0a0"/><circle cx="670" cy="414" r="7.5" fill="#a0a0a0"/><path d="M660 344h8v17h-8z" fill="#c8c8c8"/><rect x="661.5" y="346" width="5" height="4" fill="#1b1a1d"/><path d="M669 348l3 3v8" fill="none" stroke="#c8c8c8" stroke-width="1.3"/><path d="M703 430h14M705 433h10M712 420v8" stroke="#bbb" stroke-width="1.5"/><circle cx="772.5" cy="335" r="92" fill="#1b1a1d" stroke="#8a8a8a" stroke-width="1.5"/><path d="M723 370 L716 356 L713 340 L714 324 L719 308 L729 295 L741 284 L756 278 L772 275 L788 278 L803 284 L816 294 L835 315 L850 345 L845 400 L740 400 Z" fill="#fff"/><circle cx="723" cy="370" r="3.2" fill="#fff" stroke="#444" stroke-width="1.4"/><circle cx="716" cy="356" r="3.2" fill="#fff" stroke="#444" stroke-width="1.4"/><circle cx="713" cy="340" r="3.2" fill="#fff" stroke="#444" stroke-width="1.4"/><circle cx="714" cy="324" r="3.2" fill="#fff" stroke="#444" stroke-width="1.4"/><circle cx="719" cy="308" r="3.2" fill="#fff" stroke="#444" stroke-width="1.4"/><circle cx="729" cy="295" r="3.2" fill="#fff" stroke="#444" stroke-width="1.4"/><circle cx="741" cy="284" r="3.2" fill="#fff" stroke="#444" stroke-width="1.4"/><circle cx="756" cy="278" r="3.2" fill="#fff" stroke="#444" stroke-width="1.4"/><circle cx="772" cy="275" r="3.2" fill="#fff" stroke="#444" stroke-width="1.4"/><circle cx="788" cy="278" r="3.2" fill="#fff" stroke="#444" stroke-width="1.4"/><circle cx="803" cy="284" r="3.2" fill="#fff" stroke="#444" stroke-width="1.4"/><circle cx="816" cy="294" r="3.2" fill="#fff" stroke="#444" stroke-width="1.4"/><rect x="727" y="379" width="40" height="31" rx="4" fill="#c2c2c2"/><text x="772.5" y="267" text-anchor="middle" font-family="Liberation Sans" font-weight="bold" font-size="11" fill="#ddd">50</text><text x="712.5" y="380" text-anchor="middle" font-family="Liberation Sans" font-weight="bold" font-size="11" fill="#ddd">0</text><circle cx="877" cy="399.5" r="64.5" fill="#000" stroke="#8a8a8a" stroke-width="1.5"/><circle cx="880" cy="401" r="39" fill="#fff"/><circle cx="866.7" cy="364.4" r="3.3" fill="#fff" stroke="#333" stroke-width="1.3"/><circle cx="884.1" cy="362.2" r="3.3" fill="#fff" stroke="#333" stroke-width="1.3"/><circle cx="900.7" cy="367.9" r="3.3" fill="#fff" stroke="#333" stroke-width="1.3"/><circle cx="913.1" cy="380.3" r="3.3" fill="#fff" stroke="#333" stroke-width="1.3"/><circle cx="918.8" cy="396.9" r="3.3" fill="#fff" stroke="#333" stroke-width="1.3"/><circle cx="916.6" cy="414.3" r="3.3" fill="#fff" stroke="#333" stroke-width="1.3"/><circle cx="907.1" cy="429.1" r="3.3" fill="#fff" stroke="#333" stroke-width="1.3"/><circle cx="892.1" cy="438.1" r="3.3" fill="#fff" stroke="#333" stroke-width="1.3"/><circle cx="874.6" cy="439.6" r="3.3" fill="#fff" stroke="#333" stroke-width="1.3"/><circle cx="858.2" cy="433.3" r="3.3" fill="#fff" stroke="#333" stroke-width="1.3"/><circle cx="846.2" cy="420.5" r="3.3" fill="#fff" stroke="#333" stroke-width="1.3"/><circle cx="841.1" cy="403.7" r="3.3" fill="#fff" stroke="#333" stroke-width="1.3"/><text x="917" y="370" text-anchor="middle" font-family="Liberation Sans" font-weight="bold" font-size="10" fill="#ddd">6</text><text x="926" y="419" text-anchor="middle" font-family="Liberation Sans" font-weight="bold" font-size="10" fill="#ddd">4</text><text x="890" y="452" text-anchor="middle" font-family="Liberation Sans" font-weight="bold" font-size="10" fill="#ddd">2</text><circle cx="811" cy="372" r="74.6" fill="#535353"/><path d="M865.0 372.0L882.0 372.0" stroke="#bdbdbd" stroke-width="2"/><path d="M857.8 399.0L872.5 407.5" stroke="#bdbdbd" stroke-width="2"/><path d="M838.0 418.8L846.5 433.5" stroke="#bdbdbd" stroke-width="2"/><path d="M811.0 426.0L811.0 443.0" stroke="#bdbdbd" stroke-width="2"/><path d="M784.0 418.8L775.5 433.5" stroke="#bdbdbd" stroke-width="2"/><path d="M764.2 399.0L749.5 407.5" stroke="#bdbdbd" stroke-width="2"/><path d="M757.0 372.0L740.0 372.0" stroke="#bdbdbd" stroke-width="2"/><path d="M764.2 345.0L749.5 336.5" stroke="#bdbdbd" stroke-width="2"/><path d="M784.0 325.2L775.5 310.5" stroke="#bdbdbd" stroke-width="2"/><path d="M811.0 318.0L811.0 301.0" stroke="#bdbdbd" stroke-width="2"/><path d="M838.0 325.2L846.5 310.5" stroke="#bdbdbd" stroke-width="2"/><path d="M857.8 345.0L872.5 336.5" stroke="#bdbdbd" stroke-width="2"/><path d="M809 368.5 L878 387.5 L877 391.5 L808 376 Z" fill="#fff"/><circle cx="811" cy="372" r="6.5" fill="#fff"/><rect x="736" y="297" width="150" height="150" fill="none" stroke="#f5b800" stroke-width="1" stroke-dasharray="4 3"/><rect x="732.5" y="293.5" width="7" height="7" fill="#f5b800"/><rect x="732.5" y="368.5" width="7" height="7" fill="#f5b800"/><rect x="732.5" y="443.5" width="7" height="7" fill="#f5b800"/><rect x="807.5" y="293.5" width="7" height="7" fill="#f5b800"/><rect x="807.5" y="443.5" width="7" height="7" fill="#f5b800"/><rect x="882.5" y="293.5" width="7" height="7" fill="#f5b800"/><rect x="882.5" y="368.5" width="7" height="7" fill="#f5b800"/><rect x="882.5" y="443.5" width="7" height="7" fill="#f5b800"/><rect x="533.5" y="225.5" width="67" height="271" fill="none" stroke="#f5b800" stroke-width="1" stroke-dasharray="4 3"/><rect x="945.5" y="225.5" width="67" height="271" fill="none" stroke="#f5b800" stroke-width="1" stroke-dasharray="4 3"/><!--B--><circle cx="812" cy="467.5" r="14" fill="url(#badgeg)" stroke="#c01010" stroke-width="0.8"/><text x="812" y="472.5" text-anchor="middle" font-family="Liberation Sans" font-size="13" fill="#fff">16</text><!--/B--><path d="M522 236 L442 236 L441 284 L522 284" fill="none" stroke="#f4f4f4" stroke-width="2.5"/><path d="M463 251.5 L471.5 260.0 L463 268.5" fill="none" stroke="#f4f4f4" stroke-width="2.6"/><path d="M522 304 L441 304 L440 353 L522 353" fill="none" stroke="#f4f4f4" stroke-width="2.5"/><path d="M458 320.0 L466.5 328.5 L458 337.0" fill="none" stroke="#f4f4f4" stroke-width="2.6"/><path d="M522 371 L441 371 L440 420 L522 420" fill="none" stroke="#f4f4f4" stroke-width="2.5"/><path d="M458 387.0 L466.5 395.5 L458 404.0" fill="none" stroke="#f4f4f4" stroke-width="2.6"/><path d="M522 439 L442 439 L441 487 L522 487" fill="none" stroke="#f4f4f4" stroke-width="2.5"/><path d="M463 454.5 L471.5 463.0 L463 471.5" fill="none" stroke="#f4f4f4" stroke-width="2.6"/><path d="M1022 236 L1113 236 L1114.5 284 L1022 284" fill="none" stroke="#f4f4f4" stroke-width="2.5"/><path d="M1089 251.5 L1080.5 260.0 L1089 268.5" fill="none" stroke="#f4f4f4" stroke-width="2.6"/><path d="M1022 303 L1115 303 L1116.5 352 L1022 352" fill="none" stroke="#f4f4f4" stroke-width="2.5"/><path d="M1096 319.0 L1087.5 327.5 L1096 336.0" fill="none" stroke="#f4f4f4" stroke-width="2.6"/><path d="M1022 371 L1116 371 L1117.5 420 L1022 420" fill="none" stroke="#f4f4f4" stroke-width="2.5"/><path d="M1096 387.0 L1087.5 395.5 L1096 404.0" fill="none" stroke="#f4f4f4" stroke-width="2.6"/><path d="M1022 439 L1114 439 L1115.5 488 L1022 488" fill="none" stroke="#f4f4f4" stroke-width="2.5"/><path d="M1089 455.0 L1080.5 463.5 L1089 472.0" fill="none" stroke="#f4f4f4" stroke-width="2.6"/><circle cx="1141.2" cy="240.1" r="8.2" fill="#fff"/><path d="M1138.3 262.5A6 6 0 1 0 1145.7 262.5" fill="none" stroke="#fff" stroke-width="2.6"/><path d="M1142 259v7" stroke="#fff" stroke-width="2.6"/><path d="M1137 294h13M1143 291l2-2h2M1143 297l2 2h2" fill="none" stroke="#fff" stroke-width="1.2"/><circle cx="1137" cy="294" r="1.8" fill="#fff"/><path d="M1148 292l3 2-3 2z" fill="#fff"/><path d="M1138 328A14 14 0 0 1 1152 314M1143 328A9 9 0 0 1 1152 319" fill="none" stroke="#fff" stroke-width="2.6"/><path d="M1152 328h-5a5 5 0 0 1 5-5z" fill="#fff"/><rect x="1136.5" y="340" width="16.2" height="16.3" fill="#fff"/><circle cx="1250.5" cy="280.3" r="73.3" fill="#202020" stroke="#f2f2f2" stroke-width="3.2"/><path d="M1297.1 286.4L1317.9 289.2" stroke="#2b2b2b" stroke-width="10"/><path d="M1293.9 298.3L1313.3 306.3" stroke="#2b2b2b" stroke-width="10"/><path d="M1287.8 308.9L1304.4 321.7" stroke="#2b2b2b" stroke-width="10"/><path d="M1279.1 317.6L1291.9 334.2" stroke="#2b2b2b" stroke-width="10"/><path d="M1268.5 323.7L1276.5 343.1" stroke="#2b2b2b" stroke-width="10"/><path d="M1256.6 326.9L1259.4 347.7" stroke="#2b2b2b" stroke-width="10"/><path d="M1244.4 326.9L1241.6 347.7" stroke="#2b2b2b" stroke-width="10"/><path d="M1232.5 323.7L1224.5 343.1" stroke="#2b2b2b" stroke-width="10"/><path d="M1221.9 317.6L1209.1 334.2" stroke="#2b2b2b" stroke-width="10"/><path d="M1213.2 308.9L1196.6 321.7" stroke="#2b2b2b" stroke-width="10"/><path d="M1207.1 298.3L1187.7 306.3" stroke="#2b2b2b" stroke-width="10"/><path d="M1203.9 286.4L1183.1 289.2" stroke="#2b2b2b" stroke-width="10"/><path d="M1203.9 274.2L1183.1 271.4" stroke="#2b2b2b" stroke-width="10"/><path d="M1207.1 262.3L1187.7 254.3" stroke="#2b2b2b" stroke-width="10"/><path d="M1213.2 251.7L1196.6 238.9" stroke="#2b2b2b" stroke-width="10"/><path d="M1221.9 243.0L1209.1 226.4" stroke="#2b2b2b" stroke-width="10"/><path d="M1232.5 236.9L1224.5 217.5" stroke="#2b2b2b" stroke-width="10"/><path d="M1244.4 233.7L1241.6 212.9" stroke="#2b2b2b" stroke-width="10"/><path d="M1256.6 233.7L1259.4 212.9" stroke="#2b2b2b" stroke-width="10"/><path d="M1268.5 236.9L1276.5 217.5" stroke="#2b2b2b" stroke-width="10"/><path d="M1279.1 243.0L1291.9 226.4" stroke="#2b2b2b" stroke-width="10"/><path d="M1287.8 251.7L1304.4 238.9" stroke="#2b2b2b" stroke-width="10"/><path d="M1293.9 262.3L1313.3 254.3" stroke="#2b2b2b" stroke-width="10"/><path d="M1297.1 274.2L1317.9 271.4" stroke="#2b2b2b" stroke-width="10"/><path d="M1297.5 280.3L1319.5 280.3" stroke="#1e1e1e" stroke-width="2.5"/><path d="M1295.9 292.5L1317.1 298.2" stroke="#1e1e1e" stroke-width="2.5"/><path d="M1291.2 303.8L1310.3 314.8" stroke="#1e1e1e" stroke-width="2.5"/><path d="M1283.7 313.5L1299.3 329.1" stroke="#1e1e1e" stroke-width="2.5"/><path d="M1274.0 321.0L1285.0 340.1" stroke="#1e1e1e" stroke-width="2.5"/><path d="M1262.7 325.7L1268.4 346.9" stroke="#1e1e1e" stroke-width="2.5"/><path d="M1250.5 327.3L1250.5 349.3" stroke="#1e1e1e" stroke-width="2.5"/><path d="M1238.3 325.7L1232.6 346.9" stroke="#1e1e1e" stroke-width="2.5"/><path d="M1227.0 321.0L1216.0 340.1" stroke="#1e1e1e" stroke-width="2.5"/><path d="M1217.3 313.5L1201.7 329.1" stroke="#1e1e1e" stroke-width="2.5"/><path d="M1209.8 303.8L1190.7 314.8" stroke="#1e1e1e" stroke-width="2.5"/><path d="M1205.1 292.5L1183.9 298.2" stroke="#1e1e1e" stroke-width="2.5"/><path d="M1203.5 280.3L1181.5 280.3" stroke="#1e1e1e" stroke-width="2.5"/><path d="M1205.1 268.1L1183.9 262.4" stroke="#1e1e1e" stroke-width="2.5"/><path d="M1209.8 256.8L1190.7 245.8" stroke="#1e1e1e" stroke-width="2.5"/><path d="M1217.3 247.1L1201.7 231.5" stroke="#1e1e1e" stroke-width="2.5"/><path d="M1227.0 239.6L1216.0 220.5" stroke="#1e1e1e" stroke-width="2.5"/><path d="M1238.3 234.9L1232.6 213.7" stroke="#1e1e1e" stroke-width="2.5"/><path d="M1250.5 233.3L1250.5 211.3" stroke="#1e1e1e" stroke-width="2.5"/><path d="M1262.7 234.9L1268.4 213.7" stroke="#1e1e1e" stroke-width="2.5"/><path d="M1274.0 239.6L1285.0 220.5" stroke="#1e1e1e" stroke-width="2.5"/><path d="M1283.7 247.1L1299.3 231.5" stroke="#1e1e1e" stroke-width="2.5"/><path d="M1291.2 256.8L1310.3 245.8" stroke="#1e1e1e" stroke-width="2.5"/><path d="M1295.9 268.1L1317.1 262.4" stroke="#1e1e1e" stroke-width="2.5"/><circle cx="1250.5" cy="280.3" r="46" fill="#292929" stroke="#232323" stroke-width="2"/><rect x="1139" y="370" width="51" height="51" fill="none" stroke="#f4f4f4" stroke-width="2.5"/><path d="M1152 386a16 16 0 0 1 22-3M1179 392a16 16 0 0 1-4 21M1170 413a16 16 0 0 1-21-9" fill="none" stroke="#f4f4f4" stroke-width="3.2"/><circle cx="1150" cy="388" r="2" fill="#f4f4f4"/><circle cx="1180" cy="390" r="2" fill="#f4f4f4"/><circle cx="1165" cy="414" r="2" fill="#f4f4f4"/><path d="M1170 378l6 5-7 3z M1181 410l-6 5 0-7z M1146 398l2 8 5-6z" fill="#f4f4f4"/><rect x="1212" y="370" width="50" height="51" fill="none" stroke="#f4f4f4" stroke-width="2.5"/><path d="M1217 375l14 14M1257 375l-14 14M1217 416l14-14M1257 416l-14-14" stroke="#f4f4f4" stroke-width="2.4"/><path d="M1233 391l-9 -2 7 -7z M1241 391l9 -2 -7 -7z M1233 400l-9 2 7 7z M1241 400l9 2 -7 7z" fill="#f4f4f4"/><circle cx="1237" cy="395.5" r="3.8" fill="#f4f4f4"/><rect x="1136" y="438" width="52" height="51" fill="none" stroke="#f4f4f4" stroke-width="2.5"/><path d="M1148 455a15 15 0 1 1 8 26" fill="none" stroke="#f4f4f4" stroke-width="4"/><path d="M1142 447l2 12 9-6z" fill="#f4f4f4"/><circle cx="1151" cy="480" r="3.5" fill="#f4f4f4"/><path d="M1209.7 440 L1205 521" stroke="#aaa" stroke-width="1.6"/><circle cx="1209.7" cy="439.7" r="3.5" fill="#aaa"/><path d="M1218.5 510 C1230 470 1248 444.3 1275 444.3 C1302 444.3 1320 470 1331.5 510 Z" fill="url(#bumpg)"/><path d="M1218 509 Q1275 505 1332 509 Q1334 515 1322 515 Q1275 511 1228 515 Q1216 515 1218 509 Z" fill="#1c1c1c"/></svg>
<svg class="a" style="left:1472px;top:256px;" width="28" height="28" viewBox="0 0 28 28"><defs><radialGradient id="b15" cx="0.45" cy="0.35" r="0.7"><stop offset="0" stop-color="#f04848"/><stop offset="1" stop-color="#d01818"/></radialGradient></defs><circle cx="14" cy="14" r="13.5" fill="url(#b15)"/><text x="14" y="19" text-anchor="middle" font-family="Liberation Sans" font-size="13" fill="#fff">15</text></svg>
<div class="a" style="left:4px;top:755px;width:381px;height:195px;background:#dcdcdc;border:1px solid #1a1a1a"></div>
<div class="a" style="left:5px;top:756px;width:379px;height:193px;overflow:hidden"><svg class="a" style="left:-5px;top:-756px;opacity:0.6" width="1918" height="976" viewBox="0 0 1918 976"><g transform="translate(-128.38 716.25) scale(0.3427)"><defs><linearGradient id="sbodyg" x1="0" y1="116" x2="0" y2="607" gradientUnits="userSpaceOnUse"><stop offset="0" stop-color="#3a3a3a"/><stop offset="0.05" stop-color="#474747"/><stop offset="0.13" stop-color="#3e3e3e"/><stop offset="0.2" stop-color="#3a3a3a"/><stop offset="0.75" stop-color="#2e2e2e"/><stop offset="0.95" stop-color="#262626"/><stop offset="1" stop-color="#1a1a1a"/></linearGradient><linearGradient id="sbezg" x1="0" y1="180" x2="0" y2="545" gradientUnits="userSpaceOnUse"><stop offset="0" stop-color="#a8a8a8"/><stop offset="0.5" stop-color="#999"/><stop offset="0.88" stop-color="#c9c9c9"/><stop offset="1" stop-color="#8c8c8c"/></linearGradient><linearGradient id="sscrg" x1="533" y1="0" x2="1012" y2="0" gradientUnits="userSpaceOnUse"><stop offset="0" stop-color="#bccde6"/><stop offset="0.45" stop-color="#f4f6fa"/><stop offset="0.6" stop-color="#f2f5fa"/><stop offset="1" stop-color="#bfcfe8"/></linearGradient><linearGradient id="spanelg" x1="0" y1="202" x2="0" y2="521" gradientUnits="userSpaceOnUse"><stop offset="0" stop-color="#3c3c3c"/><stop offset="1" stop-color="#323232"/></linearGradient><linearGradient id="sbumpg" x1="1217" y1="0" x2="1332" y2="0" gradientUnits="userSpaceOnUse"><stop offset="0" stop-color="#2e2e2e"/><stop offset="0.33" stop-color="#7a7a7a"/><stop offset="0.52" stop-color="#3e3e3e"/><stop offset="0.74" stop-color="#757575"/><stop offset="1" stop-color="#2e2e2e"/></linearGradient><radialGradient id="sbadgeg" cx="0.45" cy="0.35" r="0.7"><stop offset="0" stop-color="#f04848"/><stop offset="1" stop-color="#d01818"/></radialGradient><filter id="sblur2" x="-20%" y="-20%" width="140%" height="140%"><feGaussianBlur stdDeviation="2.2"/></filter></defs><path d="M640 121 Q940 108 1250 126 C1345 128 1372 140 1378 176.5 C1381 190 1383.5 205 1384 225 L1384.5 265 L1384.7 440 L1383 530 C1381 565 1370 585 1346 591 C1320 596 1290 597 1250 597.7 Q880 611 640 602.6 L460 593 C440 592 418 584 408 572 C400 562 397 550 396.5 530 L393.5 290 C394 225 396 192 405 172 C414 150 426 135 460 129.8 Z" fill="url(#sbodyg)"/><path d="M480 136 C445 140 420 155 410 185 L404 250" fill="none" stroke="#585858" stroke-width="6" filter="url(#sblur2)"/><path d="M1300 134 C1335 138 1360 152 1368 185 L1374 250" fill="none" stroke="#585858" stroke-width="6" filter="url(#sblur2)"/><path d="M435 186 Q890 162 1345 186 Q1361 187 1361 203 Q1370 362 1359 522 Q1359 535 1344 535 Q890 563 436 537 Q419 536 419 520 Q407 361 419 203 Q419 187 435 186 Z" fill="#161616" opacity="0.9" filter="url(#sblur2)"/><path d="M426 512 Q426 537 440 537.5 Q890 564 1342 535.5 Q1354 535 1354 512 Z" fill="#434343" filter="url(#sblur1)"/><path d="M437 193.5 Q890 170 1343 193 Q1353 194 1353 204 Q1364 362 1351 520 Q1351 527 1342 527 Q890 555 438 529 Q427 528 427 518 Q413 361 427 204 Q427 194 437 193.5 Z" fill="url(#sbezg)"/><path d="M444 201 Q890 178 1337 200 Q1345 201 1345 209 Q1354 358 1345 506 L435 506 Q425 358 435 210 Q435 202 444 201 Z" fill="#383838"/><path d="M436 506 L1345 506 L1345 519 Q890 543 436 521 Z" fill="#c6c6c6"/><path d="M436 521 Q890 543 1345 519 L1345 522 Q890 548 436 525 Z" fill="#a4a4a4"/><path d="M448 204 L514 204 Q527 204 527 217 L527 507 Q527 519 515 519 L448 519 Q436 519 436 507 L436 216 Q436 204 448 204 Z" fill="#353535"/><path d="M508 206 Q500 360 497 519" fill="none" stroke="#4a4a4a" stroke-width="1.5" opacity="0.8"/><path d="M1033 202 L1331 202 Q1344 202 1344 215 L1344 508 Q1344 521 1331 521 L1033 521 Q1019 521 1019 507 L1019 216 Q1019 202 1033 202 Z" fill="url(#spanelg)"/><path d="M1036 205 L1050 519" stroke="#4a4a4a" stroke-width="1.2" opacity="0.7"/><rect x="527" y="217" width="491" height="289" fill="#000"/><rect x="533" y="225" width="480" height="272" fill="url(#sscrg)"/><rect x="539" y="231" width="468" height="262" rx="12" fill="#1b1a1d"/><rect x="587" y="239" width="373" height="246" rx="9" fill="url(#sscrg)"/><rect x="533" y="281" width="54" height="19" fill="#c3d2e9"/><rect x="960" y="281" width="53" height="19" fill="#c3d2e9"/><rect x="533" y="352" width="54" height="22" fill="#c3d2e9"/><rect x="960" y="352" width="53" height="22" fill="#c3d2e9"/><rect x="533" y="427" width="54" height="17" fill="#c3d2e9"/><rect x="960" y="427" width="53" height="17" fill="#c3d2e9"/><path d="M595 258 Q595 251 602 251 L945 251 Q952 251 952 258 L952 334 A16.5 16.5 0 0 1 919 334 L919 318 L880 318 Q866 318 866 304 L866 272 Q866 259 852 259 L694 259 Q680 259 680 272 L680 304 Q680 318 666 318 L628 318 L628 334 A16.5 16.5 0 0 1 595 334 Z" fill="#1b1a1d" stroke="#8a8a8a" stroke-width="1"/><rect x="601" y="257" width="72" height="55" rx="2" fill="#c2c2c2"/><rect x="874" y="257" width="72" height="55" rx="2" fill="#c2c2c2"/><text x="930" y="272" font-family="Liberation Sans" font-weight="bold" font-size="7" fill="#555">c</text><text x="926" y="288" font-family="Liberation Sans" font-weight="bold" font-size="6.5" fill="#555">FM</text><path d="M927 300h3l3-3v9l-3-3h-3z" fill="#555"/><circle cx="669" cy="400" r="64.5" fill="#1b1a1d" stroke="#8a8a8a" stroke-width="1.5"/><path d="M618 424 A56 56 0 0 1 652.4 347.2 L634 372 L628.5 394 L630 416 Z" fill="#fff"/><path d="M625.1 365.3 A56 56 0 0 1 652.4 347.2 L632 371 Z" fill="#e0001a"/><path d="M627 437 A56 56 0 0 0 712.6 437 L695.7 426.8 L679 437.7 L660 438 L643 429.4 Z" fill="#fff"/><path d="M684.6 454 A56 56 0 0 0 712.6 437 L695.7 426.8 L679.5 437.7 Z" fill="#e0001a"/><path d="M652.4 347.2 L654.5 365.7 L639 377 L631 394.6 L632.7 414" fill="none" stroke="#aaa" stroke-width="1"/><circle cx="632.7" cy="414" r="3" fill="#1b1a1d" stroke="#bbb" stroke-width="1.2"/><circle cx="631" cy="394.6" r="3" fill="#1b1a1d" stroke="#bbb" stroke-width="1.2"/><circle cx="639" cy="377" r="3" fill="#1b1a1d" stroke="#bbb" stroke-width="1.2"/><circle cx="654.5" cy="365.7" r="3" fill="#1b1a1d" stroke="#bbb" stroke-width="1.2"/><circle cx="643" cy="429.4" r="3" fill="#1b1a1d" stroke="#bbb" stroke-width="1.2"/><circle cx="660" cy="438" r="3" fill="#1b1a1d" stroke="#bbb" stroke-width="1.2"/><circle cx="679" cy="437.7" r="3" fill="#1b1a1d" stroke="#bbb" stroke-width="1.2"/><circle cx="695.7" cy="426.8" r="3" fill="#1b1a1d" stroke="#bbb" stroke-width="1.2"/><circle cx="658" cy="394.5" r="7.5" fill="#a0a0a0"/><circle cx="670" cy="414" r="7.5" fill="#a0a0a0"/><path d="M660 344h8v17h-8z" fill="#c8c8c8"/><rect x="661.5" y="346" width="5" height="4" fill="#1b1a1d"/><path d="M669 348l3 3v8" fill="none" stroke="#c8c8c8" stroke-width="1.3"/><path d="M703 430h14M705 433h10M712 420v8" stroke="#bbb" stroke-width="1.5"/><circle cx="772.5" cy="335" r="92" fill="#1b1a1d" stroke="#8a8a8a" stroke-width="1.5"/><path d="M723 370 L716 356 L713 340 L714 324 L719 308 L729 295 L741 284 L756 278 L772 275 L788 278 L803 284 L816 294 L835 315 L850 345 L845 400 L740 400 Z" fill="#fff"/><circle cx="723" cy="370" r="3.2" fill="#fff" stroke="#444" stroke-width="1.4"/><circle cx="716" cy="356" r="3.2" fill="#fff" stroke="#444" stroke-width="1.4"/><circle cx="713" cy="340" r="3.2" fill="#fff" stroke="#444" stroke-width="1.4"/><circle cx="714" cy="324" r="3.2" fill="#fff" stroke="#444" stroke-width="1.4"/><circle cx="719" cy="308" r="3.2" fill="#fff" stroke="#444" stroke-width="1.4"/><circle cx="729" cy="295" r="3.2" fill="#fff" stroke="#444" stroke-width="1.4"/><circle cx="741" cy="284" r="3.2" fill="#fff" stroke="#444" stroke-width="1.4"/><circle cx="756" cy="278" r="3.2" fill="#fff" stroke="#444" stroke-width="1.4"/><circle cx="772" cy="275" r="3.2" fill="#fff" stroke="#444" stroke-width="1.4"/><circle cx="788" cy="278" r="3.2" fill="#fff" stroke="#444" stroke-width="1.4"/><circle cx="803" cy="284" r="3.2" fill="#fff" stroke="#444" stroke-width="1.4"/><circle cx="816" cy="294" r="3.2" fill="#fff" stroke="#444" stroke-width="1.4"/><rect x="727" y="379" width="40" height="31" rx="4" fill="#c2c2c2"/><text x="772.5" y="267" text-anchor="middle" font-family="Liberation Sans" font-weight="bold" font-size="11" fill="#ddd">50</text><text x="712.5" y="380" text-anchor="middle" font-family="Liberation Sans" font-weight="bold" font-size="11" fill="#ddd">0</text><circle cx="877" cy="399.5" r="64.5" fill="#000" stroke="#8a8a8a" stroke-width="1.5"/><circle cx="880" cy="401" r="39" fill="#fff"/><circle cx="866.7" cy="364.4" r="3.3" fill="#fff" stroke="#333" stroke-width="1.3"/><circle cx="884.1" cy="362.2" r="3.3" fill="#fff" stroke="#333" stroke-width="1.3"/><circle cx="900.7" cy="367.9" r="3.3" fill="#fff" stroke="#333" stroke-width="1.3"/><circle cx="913.1" cy="380.3" r="3.3" fill="#fff" stroke="#333" stroke-width="1.3"/><circle cx="918.8" cy="396.9" r="3.3" fill="#fff" stroke="#333" stroke-width="1.3"/><circle cx="916.6" cy="414.3" r="3.3" fill="#fff" stroke="#333" stroke-width="1.3"/><circle cx="907.1" cy="429.1" r="3.3" fill="#fff" stroke="#333" stroke-width="1.3"/><circle cx="892.1" cy="438.1" r="3.3" fill="#fff" stroke="#333" stroke-width="1.3"/><circle cx="874.6" cy="439.6" r="3.3" fill="#fff" stroke="#333" stroke-width="1.3"/><circle cx="858.2" cy="433.3" r="3.3" fill="#fff" stroke="#333" stroke-width="1.3"/><circle cx="846.2" cy="420.5" r="3.3" fill="#fff" stroke="#333" stroke-width="1.3"/><circle cx="841.1" cy="403.7" r="3.3" fill="#fff" stroke="#333" stroke-width="1.3"/><text x="917" y="370" text-anchor="middle" font-family="Liberation Sans" font-weight="bold" font-size="10" fill="#ddd">6</text><text x="926" y="419" text-anchor="middle" font-family="Liberation Sans" font-weight="bold" font-size="10" fill="#ddd">4</text><text x="890" y="452" text-anchor="middle" font-family="Liberation Sans" font-weight="bold" font-size="10" fill="#ddd">2</text><circle cx="811" cy="372" r="74.6" fill="#535353"/><path d="M865.0 372.0L882.0 372.0" stroke="#bdbdbd" stroke-width="2"/><path d="M857.8 399.0L872.5 407.5" stroke="#bdbdbd" stroke-width="2"/><path d="M838.0 418.8L846.5 433.5" stroke="#bdbdbd" stroke-width="2"/><path d="M811.0 426.0L811.0 443.0" stroke="#bdbdbd" stroke-width="2"/><path d="M784.0 418.8L775.5 433.5" stroke="#bdbdbd" stroke-width="2"/><path d="M764.2 399.0L749.5 407.5" stroke="#bdbdbd" stroke-width="2"/><path d="M757.0 372.0L740.0 372.0" stroke="#bdbdbd" stroke-width="2"/><path d="M764.2 345.0L749.5 336.5" stroke="#bdbdbd" stroke-width="2"/><path d="M784.0 325.2L775.5 310.5" stroke="#bdbdbd" stroke-width="2"/><path d="M811.0 318.0L811.0 301.0" stroke="#bdbdbd" stroke-width="2"/><path d="M838.0 325.2L846.5 310.5" stroke="#bdbdbd" stroke-width="2"/><path d="M857.8 345.0L872.5 336.5" stroke="#bdbdbd" stroke-width="2"/><path d="M809 368.5 L878 387.5 L877 391.5 L808 376 Z" fill="#fff"/><circle cx="811" cy="372" r="6.5" fill="#fff"/><rect x="736" y="297" width="150" height="150" fill="none" stroke="#f5b800" stroke-width="1" stroke-dasharray="4 3"/><rect x="732.5" y="293.5" width="7" height="7" fill="#f5b800"/><rect x="732.5" y="368.5" width="7" height="7" fill="#f5b800"/><rect x="732.5" y="443.5" width="7" height="7" fill="#f5b800"/><rect x="807.5" y="293.5" width="7" height="7" fill="#f5b800"/><rect x="807.5" y="443.5" width="7" height="7" fill="#f5b800"/><rect x="882.5" y="293.5" width="7" height="7" fill="#f5b800"/><rect x="882.5" y="368.5" width="7" height="7" fill="#f5b800"/><rect x="882.5" y="443.5" width="7" height="7" fill="#f5b800"/><rect x="533.5" y="225.5" width="67" height="271" fill="none" stroke="#f5b800" stroke-width="1" stroke-dasharray="4 3"/><rect x="945.5" y="225.5" width="67" height="271" fill="none" stroke="#f5b800" stroke-width="1" stroke-dasharray="4 3"/><path d="M522 236 L442 236 L441 284 L522 284" fill="none" stroke="#f4f4f4" stroke-width="2.5"/><path d="M463 251.5 L471.5 260.0 L463 268.5" fill="none" stroke="#f4f4f4" stroke-width="2.6"/><path d="M522 304 L441 304 L440 353 L522 353" fill="none" stroke="#f4f4f4" stroke-width="2.5"/><path d="M458 320.0 L466.5 328.5 L458 337.0" fill="none" stroke="#f4f4f4" stroke-width="2.6"/><path d="M522 371 L441 371 L440 420 L522 420" fill="none" stroke="#f4f4f4" stroke-width="2.5"/><path d="M458 387.0 L466.5 395.5 L458 404.0" fill="none" stroke="#f4f4f4" stroke-width="2.6"/><path d="M522 439 L442 439 L441 487 L522 487" fill="none" stroke="#f4f4f4" stroke-width="2.5"/><path d="M463 454.5 L471.5 463.0 L463 471.5" fill="none" stroke="#f4f4f4" stroke-width="2.6"/><path d="M1022 236 L1113 236 L1114.5 284 L1022 284" fill="none" stroke="#f4f4f4" stroke-width="2.5"/><path d="M1089 251.5 L1080.5 260.0 L1089 268.5" fill="none" stroke="#f4f4f4" stroke-width="2.6"/><path d="M1022 303 L1115 303 L1116.5 352 L1022 352" fill="none" stroke="#f4f4f4" stroke-width="2.5"/><path d="M1096 319.0 L1087.5 327.5 L1096 336.0" fill="none" stroke="#f4f4f4" stroke-width="2.6"/><path d="M1022 371 L1116 371 L1117.5 420 L1022 420" fill="none" stroke="#f4f4f4" stroke-width="2.5"/><path d="M1096 387.0 L1087.5 395.5 L1096 404.0" fill="none" stroke="#f4f4f4" stroke-width="2.6"/><path d="M1022 439 L1114 439 L1115.5 488 L1022 488" fill="none" stroke="#f4f4f4" stroke-width="2.5"/><path d="M1089 455.0 L1080.5 463.5 L1089 472.0" fill="none" stroke="#f4f4f4" stroke-width="2.6"/><circle cx="1141.2" cy="240.1" r="8.2" fill="#fff"/><path d="M1138.3 262.5A6 6 0 1 0 1145.7 262.5" fill="none" stroke="#fff" stroke-width="2.6"/><path d="M1142 259v7" stroke="#fff" stroke-width="2.6"/><path d="M1137 294h13M1143 291l2-2h2M1143 297l2 2h2" fill="none" stroke="#fff" stroke-width="1.2"/><circle cx="1137" cy="294" r="1.8" fill="#fff"/><path d="M1148 292l3 2-3 2z" fill="#fff"/><path d="M1138 328A14 14 0 0 1 1152 314M1143 328A9 9 0 0 1 1152 319" fill="none" stroke="#fff" stroke-width="2.6"/><path d="M1152 328h-5a5 5 0 0 1 5-5z" fill="#fff"/><rect x="1136.5" y="340" width="16.2" height="16.3" fill="#fff"/><circle cx="1250.5" cy="280.3" r="73.3" fill="#202020" stroke="#f2f2f2" stroke-width="3.2"/><path d="M1297.1 286.4L1317.9 289.2" stroke="#2b2b2b" stroke-width="10"/><path d="M1293.9 298.3L1313.3 306.3" stroke="#2b2b2b" stroke-width="10"/><path d="M1287.8 308.9L1304.4 321.7" stroke="#2b2b2b" stroke-width="10"/><path d="M1279.1 317.6L1291.9 334.2" stroke="#2b2b2b" stroke-width="10"/><path d="M1268.5 323.7L1276.5 343.1" stroke="#2b2b2b" stroke-width="10"/><path d="M1256.6 326.9L1259.4 347.7" stroke="#2b2b2b" stroke-width="10"/><path d="M1244.4 326.9L1241.6 347.7" stroke="#2b2b2b" stroke-width="10"/><path d="M1232.5 323.7L1224.5 343.1" stroke="#2b2b2b" stroke-width="10"/><path d="M1221.9 317.6L1209.1 334.2" stroke="#2b2b2b" stroke-width="10"/><path d="M1213.2 308.9L1196.6 321.7" stroke="#2b2b2b" stroke-width="10"/><path d="M1207.1 298.3L1187.7 306.3" stroke="#2b2b2b" stroke-width="10"/><path d="M1203.9 286.4L1183.1 289.2" stroke="#2b2b2b" stroke-width="10"/><path d="M1203.9 274.2L1183.1 271.4" stroke="#2b2b2b" stroke-width="10"/><path d="M1207.1 262.3L1187.7 254.3" stroke="#2b2b2b" stroke-width="10"/><path d="M1213.2 251.7L1196.6 238.9" stroke="#2b2b2b" stroke-width="10"/><path d="M1221.9 243.0L1209.1 226.4" stroke="#2b2b2b" stroke-width="10"/><path d="M1232.5 236.9L1224.5 217.5" stroke="#2b2b2b" stroke-width="10"/><path d="M1244.4 233.7L1241.6 212.9" stroke="#2b2b2b" stroke-width="10"/><path d="M1256.6 233.7L1259.4 212.9" stroke="#2b2b2b" stroke-width="10"/><path d="M1268.5 236.9L1276.5 217.5" stroke="#2b2b2b" stroke-width="10"/><path d="M1279.1 243.0L1291.9 226.4" stroke="#2b2b2b" stroke-width="10"/><path d="M1287.8 251.7L1304.4 238.9" stroke="#2b2b2b" stroke-width="10"/><path d="M1293.9 262.3L1313.3 254.3" stroke="#2b2b2b" stroke-width="10"/><path d="M1297.1 274.2L1317.9 271.4" stroke="#2b2b2b" stroke-width="10"/><path d="M1297.5 280.3L1319.5 280.3" stroke="#1e1e1e" stroke-width="2.5"/><path d="M1295.9 292.5L1317.1 298.2" stroke="#1e1e1e" stroke-width="2.5"/><path d="M1291.2 303.8L1310.3 314.8" stroke="#1e1e1e" stroke-width="2.5"/><path d="M1283.7 313.5L1299.3 329.1" stroke="#1e1e1e" stroke-width="2.5"/><path d="M1274.0 321.0L1285.0 340.1" stroke="#1e1e1e" stroke-width="2.5"/><path d="M1262.7 325.7L1268.4 346.9" stroke="#1e1e1e" stroke-width="2.5"/><path d="M1250.5 327.3L1250.5 349.3" stroke="#1e1e1e" stroke-width="2.5"/><path d="M1238.3 325.7L1232.6 346.9" stroke="#1e1e1e" stroke-width="2.5"/><path d="M1227.0 321.0L1216.0 340.1" stroke="#1e1e1e" stroke-width="2.5"/><path d="M1217.3 313.5L1201.7 329.1" stroke="#1e1e1e" stroke-width="2.5"/><path d="M1209.8 303.8L1190.7 314.8" stroke="#1e1e1e" stroke-width="2.5"/><path d="M1205.1 292.5L1183.9 298.2" stroke="#1e1e1e" stroke-width="2.5"/><path d="M1203.5 280.3L1181.5 280.3" stroke="#1e1e1e" stroke-width="2.5"/><path d="M1205.1 268.1L1183.9 262.4" stroke="#1e1e1e" stroke-width="2.5"/><path d="M1209.8 256.8L1190.7 245.8" stroke="#1e1e1e" stroke-width="2.5"/><path d="M1217.3 247.1L1201.7 231.5" stroke="#1e1e1e" stroke-width="2.5"/><path d="M1227.0 239.6L1216.0 220.5" stroke="#1e1e1e" stroke-width="2.5"/><path d="M1238.3 234.9L1232.6 213.7" stroke="#1e1e1e" stroke-width="2.5"/><path d="M1250.5 233.3L1250.5 211.3" stroke="#1e1e1e" stroke-width="2.5"/><path d="M1262.7 234.9L1268.4 213.7" stroke="#1e1e1e" stroke-width="2.5"/><path d="M1274.0 239.6L1285.0 220.5" stroke="#1e1e1e" stroke-width="2.5"/><path d="M1283.7 247.1L1299.3 231.5" stroke="#1e1e1e" stroke-width="2.5"/><path d="M1291.2 256.8L1310.3 245.8" stroke="#1e1e1e" stroke-width="2.5"/><path d="M1295.9 268.1L1317.1 262.4" stroke="#1e1e1e" stroke-width="2.5"/><circle cx="1250.5" cy="280.3" r="46" fill="#292929" stroke="#232323" stroke-width="2"/><rect x="1139" y="370" width="51" height="51" fill="none" stroke="#f4f4f4" stroke-width="2.5"/><path d="M1152 386a16 16 0 0 1 22-3M1179 392a16 16 0 0 1-4 21M1170 413a16 16 0 0 1-21-9" fill="none" stroke="#f4f4f4" stroke-width="3.2"/><circle cx="1150" cy="388" r="2" fill="#f4f4f4"/><circle cx="1180" cy="390" r="2" fill="#f4f4f4"/><circle cx="1165" cy="414" r="2" fill="#f4f4f4"/><path d="M1170 378l6 5-7 3z M1181 410l-6 5 0-7z M1146 398l2 8 5-6z" fill="#f4f4f4"/><rect x="1212" y="370" width="50" height="51" fill="none" stroke="#f4f4f4" stroke-width="2.5"/><path d="M1217 375l14 14M1257 375l-14 14M1217 416l14-14M1257 416l-14-14" stroke="#f4f4f4" stroke-width="2.4"/><path d="M1233 391l-9 -2 7 -7z M1241 391l9 -2 -7 -7z M1233 400l-9 2 7 7z M1241 400l9 2 -7 7z" fill="#f4f4f4"/><circle cx="1237" cy="395.5" r="3.8" fill="#f4f4f4"/><rect x="1136" y="438" width="52" height="51" fill="none" stroke="#f4f4f4" stroke-width="2.5"/><path d="M1148 455a15 15 0 1 1 8 26" fill="none" stroke="#f4f4f4" stroke-width="4"/><path d="M1142 447l2 12 9-6z" fill="#f4f4f4"/><circle cx="1151" cy="480" r="3.5" fill="#f4f4f4"/><path d="M1209.7 440 L1205 521" stroke="#aaa" stroke-width="1.6"/><circle cx="1209.7" cy="439.7" r="3.5" fill="#aaa"/><path d="M1218.5 510 C1230 470 1248 444.3 1275 444.3 C1302 444.3 1320 470 1331.5 510 Z" fill="url(#sbumpg)"/><path d="M1218 509 Q1275 505 1332 509 Q1334 515 1322 515 Q1275 511 1228 515 Q1216 515 1218 509 Z" fill="#1c1c1c"/></g></svg></div></body></html>
